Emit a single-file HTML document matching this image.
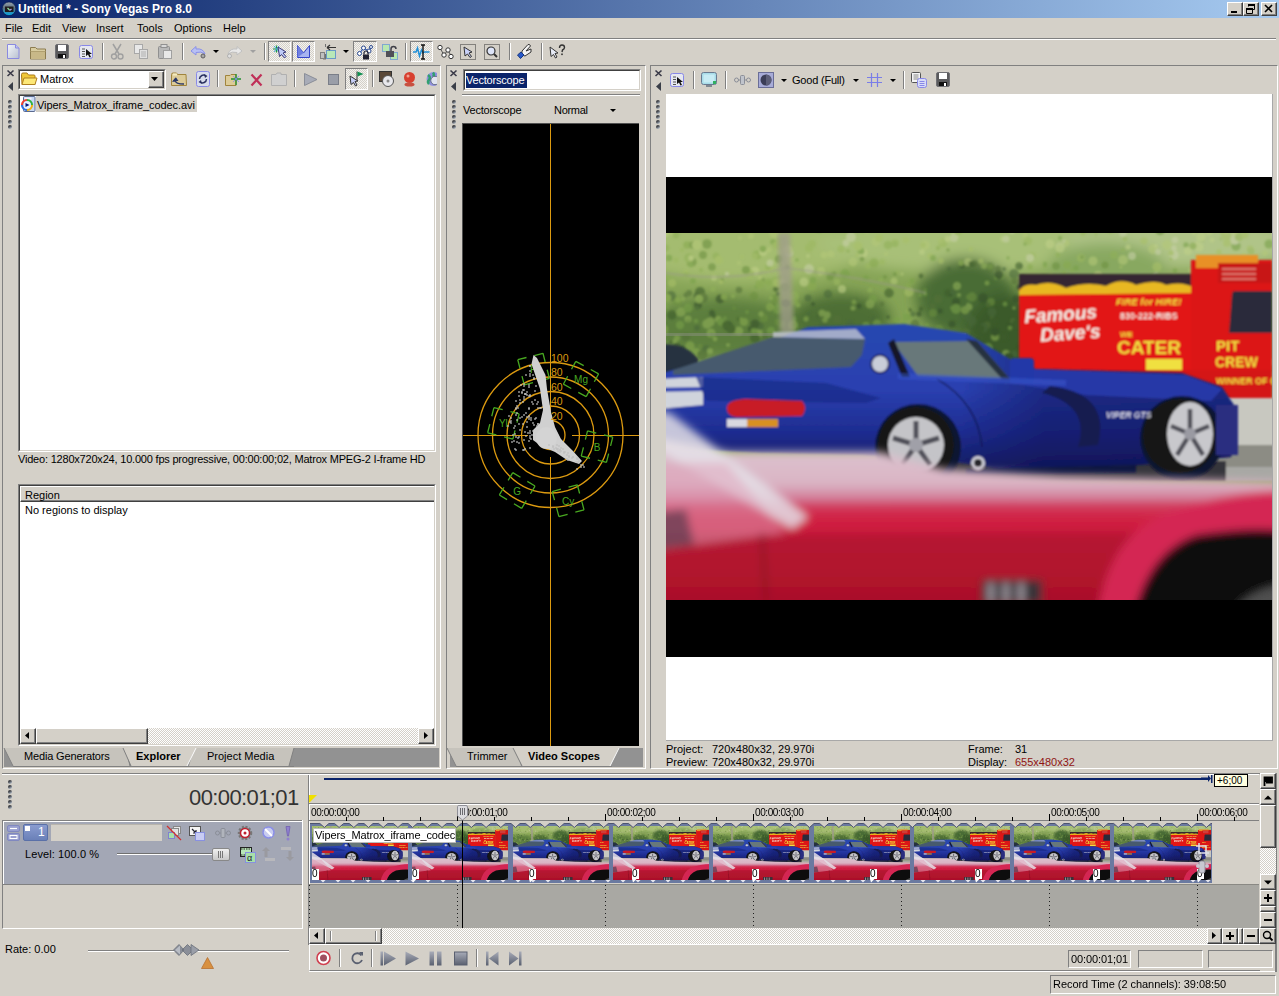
<!DOCTYPE html>
<html><head><meta charset="utf-8">
<style>
*{margin:0;padding:0;box-sizing:border-box}
html,body{width:1279px;height:996px;overflow:hidden;background:#D4D0C8;font-family:"Liberation Sans",sans-serif;font-size:11px;color:#000;position:relative}
.a{position:absolute}
.t{position:absolute;white-space:nowrap;line-height:13px}
.sunk{border-top:1px solid #808080;border-left:1px solid #808080;border-bottom:1px solid #fff;border-right:1px solid #fff}
.rais{border-top:1px solid #fff;border-left:1px solid #fff;border-bottom:1px solid #808080;border-right:1px solid #808080}
.btn{position:absolute;background:#D4D0C8;border-top:1px solid #fff;border-left:1px solid #fff;border-bottom:1px solid #404040;border-right:1px solid #404040;box-shadow:inset -1px -1px 0 #808080}
.chk{background:repeating-conic-gradient(#D4D0C8 0 25%,#fff 0 50%) 0 0/2px 2px}
.press{position:absolute;border-top:1px solid #808080;border-left:1px solid #808080;border-bottom:1px solid #fff;border-right:1px solid #fff;background:repeating-conic-gradient(#D4D0C8 0 25%,#f4f3f0 0 50%) 0 0/2px 2px}
.sep{position:absolute;width:2px;border-left:1px solid #808080;border-right:1px solid #fff}
.gd{position:absolute;width:4px;height:4px;border-radius:50%;background:linear-gradient(150deg,#303034 0%,#4a4c52 40%,#9aa4b0 75%,#d4d0c8 100%)}
svg{position:absolute;overflow:visible}
</style></head><body>
<svg width="0" height="0" style="position:absolute">
<defs>
<filter id="bl" x="-5%" y="-5%" width="110%" height="110%"><feGaussianBlur stdDeviation="0.8"/></filter>
<filter id="bl2" x="-10%" y="-10%" width="120%" height="120%"><feGaussianBlur stdDeviation="2"/></filter>
<filter id="bl3" x="-10%" y="-10%" width="120%" height="120%"><feGaussianBlur stdDeviation="4"/></filter>
<filter id="bl6" x="-20%" y="-20%" width="140%" height="140%"><feGaussianBlur stdDeviation="7"/></filter>
<linearGradient id="redcar" x1="0" y1="0" x2="0" y2="1">
<stop offset="0" stop-color="#dccad4"/><stop offset="0.27" stop-color="#dab4c4"/><stop offset="0.37" stop-color="#d06888"/><stop offset="0.45" stop-color="#cc2444"/><stop offset="0.8" stop-color="#b81430"/><stop offset="1" stop-color="#940c22"/>
</linearGradient>
<linearGradient id="bluecar" x1="0" y1="0" x2="0" y2="1">
<stop offset="0" stop-color="#2848b0"/><stop offset="0.45" stop-color="#2a40b0"/><stop offset="0.75" stop-color="#1e2c90"/><stop offset="1" stop-color="#141c60"/>
</linearGradient>
<linearGradient id="frontdark" x1="0" y1="0" x2="1" y2="0"><stop offset="0" stop-color="#0c1050" stop-opacity="0"/><stop offset="0.3" stop-color="#0c1050" stop-opacity="0.45"/><stop offset="1" stop-color="#0c1050" stop-opacity="0.5"/></linearGradient>
<g id="photo">
<rect x="-20" y="-20" width="646" height="407" fill="#86a456"/>
<g filter="url(#bl6)">
<ellipse cx="80" cy="15" rx="120" ry="35" fill="#a4bc70"/>
<ellipse cx="300" cy="10" rx="150" ry="30" fill="#a8c078"/>
<ellipse cx="520" cy="10" rx="120" ry="25" fill="#b0c488"/>
<ellipse cx="60" cy="95" rx="80" ry="30" fill="#5c7e3c"/>
<ellipse cx="175" cy="85" rx="50" ry="25" fill="#4e6e36"/>
<ellipse cx="300" cy="65" rx="50" ry="40" fill="#4a6c34"/>
<ellipse cx="340" cy="100" rx="40" ry="40" fill="#3a5a2a"/>
<ellipse cx="440" cy="35" rx="60" ry="25" fill="#88a860"/>
</g>
<g filter="url(#bl)" opacity="0.6"><circle cx="93" cy="100" r="3.7" fill="#90b058"/><circle cx="518" cy="148" r="3.2" fill="#90b058"/><circle cx="105" cy="74" r="4.3" fill="#3c5c2a"/><circle cx="222" cy="84" r="1.7" fill="#34502a"/><circle cx="567" cy="101" r="3.0" fill="#6c9040"/><circle cx="472" cy="55" r="3.0" fill="#78a048"/><circle cx="328" cy="101" r="3.8" fill="#48683a"/><circle cx="5" cy="109" r="1.8" fill="#3c5c2a"/><circle cx="274" cy="78" r="2.7" fill="#34502a"/><circle cx="85" cy="96" r="3.1" fill="#34502a"/><circle cx="37" cy="22" r="3.9" fill="#6c9040"/><circle cx="550" cy="111" r="4.2" fill="#78a048"/><circle cx="609" cy="1" r="3.5" fill="#c8d0a8"/><circle cx="508" cy="22" r="4.7" fill="#c8d0a8"/><circle cx="246" cy="48" r="3.1" fill="#88aa50"/><circle cx="189" cy="68" r="2.4" fill="#48683a"/><circle cx="89" cy="105" r="4.9" fill="#3c5c2a"/><circle cx="298" cy="78" r="4.1" fill="#34502a"/><circle cx="348" cy="41" r="4.9" fill="#48683a"/><circle cx="103" cy="17" r="2.7" fill="#b4c878"/><circle cx="207" cy="86" r="2.6" fill="#48683a"/><circle cx="96" cy="138" r="2.1" fill="#6c9040"/><circle cx="225" cy="99" r="3.9" fill="#34502a"/><circle cx="245" cy="148" r="4.9" fill="#3c5c2a"/><circle cx="543" cy="69" r="2.8" fill="#c8d0a8"/><circle cx="576" cy="29" r="3.5" fill="#a8c068"/><circle cx="494" cy="114" r="3.2" fill="#9cb860"/><circle cx="23" cy="31" r="2.5" fill="#88aa50"/><circle cx="146" cy="53" r="4.5" fill="#88aa50"/><circle cx="553" cy="147" r="4.1" fill="#6c9040"/><circle cx="21" cy="12" r="3.8" fill="#88aa50"/><circle cx="290" cy="142" r="4.6" fill="#48683a"/><circle cx="488" cy="131" r="3.6" fill="#88aa50"/><circle cx="293" cy="134" r="3.2" fill="#527038"/><circle cx="324" cy="34" r="4.2" fill="#3c5c2a"/><circle cx="229" cy="10" r="4.0" fill="#9cb860"/><circle cx="362" cy="93" r="4.5" fill="#78a048"/><circle cx="254" cy="99" r="4.1" fill="#527038"/><circle cx="74" cy="5" r="1.8" fill="#b4c878"/><circle cx="392" cy="116" r="1.8" fill="#c0d088"/><circle cx="400" cy="10" r="3.4" fill="#b4c878"/><circle cx="238" cy="132" r="3.7" fill="#527038"/><circle cx="105" cy="50" r="4.0" fill="#90b058"/><circle cx="464" cy="87" r="3.3" fill="#6c9040"/><circle cx="475" cy="117" r="1.5" fill="#6c9040"/><circle cx="531" cy="54" r="3.5" fill="#6c9040"/><circle cx="136" cy="144" r="3.6" fill="#3c5c2a"/><circle cx="143" cy="15" r="4.0" fill="#9cb860"/><circle cx="502" cy="118" r="3.2" fill="#78a048"/><circle cx="52" cy="86" r="3.3" fill="#90b058"/><circle cx="193" cy="73" r="2.5" fill="#34502a"/><circle cx="30" cy="120" r="4.9" fill="#88aa50"/><circle cx="31" cy="95" r="3.0" fill="#48683a"/><circle cx="398" cy="90" r="4.3" fill="#6c9040"/><circle cx="306" cy="142" r="3.9" fill="#90b058"/><circle cx="267" cy="73" r="2.9" fill="#527038"/><circle cx="34" cy="-6" r="3.8" fill="#b4c878"/><circle cx="145" cy="103" r="4.4" fill="#6c9040"/><circle cx="275" cy="28" r="2.8" fill="#a8c068"/><circle cx="133" cy="136" r="3.8" fill="#3c5c2a"/><circle cx="290" cy="69" r="4.0" fill="#34502a"/><circle cx="478" cy="90" r="4.2" fill="#88aa50"/><circle cx="448" cy="87" r="4.4" fill="#9cb860"/><circle cx="144" cy="137" r="2.9" fill="#6c9040"/><circle cx="506" cy="144" r="5.0" fill="#b4c878"/><circle cx="91" cy="22" r="4.6" fill="#88aa50"/><circle cx="81" cy="79" r="1.8" fill="#78a048"/><circle cx="378" cy="50" r="4.1" fill="#c0d088"/><circle cx="610" cy="17" r="3.0" fill="#78a048"/><circle cx="200" cy="93" r="3.9" fill="#78a048"/><circle cx="41" cy="-5" r="3.3" fill="#90b058"/><circle cx="595" cy="134" r="3.3" fill="#c8d0a8"/><circle cx="364" cy="34" r="2.8" fill="#88aa50"/><circle cx="282" cy="60" r="3.7" fill="#3c5c2a"/><circle cx="409" cy="97" r="3.7" fill="#c0d088"/><circle cx="108" cy="144" r="1.6" fill="#6c9040"/><circle cx="575" cy="103" r="1.6" fill="#90b058"/><circle cx="353" cy="54" r="3.0" fill="#34502a"/><circle cx="140" cy="-9" r="3.4" fill="#c0d088"/><circle cx="599" cy="20" r="2.8" fill="#b4c878"/><circle cx="222" cy="12" r="4.3" fill="#90b058"/><circle cx="261" cy="125" r="2.6" fill="#527038"/><circle cx="242" cy="78" r="2.3" fill="#90b058"/><circle cx="543" cy="-7" r="3.5" fill="#c0d088"/><circle cx="263" cy="123" r="5.0" fill="#6c9040"/><circle cx="108" cy="-0" r="4.4" fill="#9cb860"/><circle cx="325" cy="69" r="3.9" fill="#6c9040"/><circle cx="202" cy="33" r="2.7" fill="#9cb860"/><circle cx="391" cy="-9" r="4.3" fill="#78a048"/><circle cx="32" cy="72" r="3.9" fill="#34502a"/><circle cx="215" cy="46" r="2.1" fill="#78a048"/><circle cx="300" cy="99" r="3.8" fill="#527038"/><circle cx="10" cy="27" r="2.8" fill="#9cb860"/><circle cx="246" cy="101" r="4.0" fill="#6c9040"/><circle cx="39" cy="122" r="2.2" fill="#3c5c2a"/><circle cx="446" cy="87" r="3.7" fill="#88aa50"/><circle cx="99" cy="104" r="3.2" fill="#527038"/><circle cx="531" cy="61" r="1.6" fill="#9cb860"/><circle cx="415" cy="25" r="4.2" fill="#9cb860"/><circle cx="324" cy="135" r="4.9" fill="#527038"/><circle cx="122" cy="64" r="3.9" fill="#88aa50"/><circle cx="-3" cy="46" r="3.6" fill="#78a048"/><circle cx="6" cy="50" r="4.1" fill="#a8c068"/><circle cx="573" cy="76" r="4.6" fill="#c8d0a8"/><circle cx="132" cy="72" r="2.5" fill="#90b058"/><circle cx="453" cy="131" r="2.8" fill="#c0d088"/><circle cx="140" cy="86" r="2.7" fill="#88aa50"/><circle cx="349" cy="149" r="4.7" fill="#88aa50"/><circle cx="463" cy="147" r="4.1" fill="#6c9040"/><circle cx="57" cy="138" r="3.3" fill="#78a048"/><circle cx="175" cy="16" r="3.8" fill="#9cb860"/><circle cx="391" cy="113" r="4.1" fill="#88aa50"/><circle cx="123" cy="20" r="4.4" fill="#c8d0a8"/><circle cx="296" cy="32" r="3.4" fill="#34502a"/><circle cx="119" cy="116" r="2.7" fill="#90b058"/><circle cx="493" cy="108" r="4.1" fill="#a8c068"/><circle cx="226" cy="53" r="1.5" fill="#88aa50"/><circle cx="533" cy="37" r="4.4" fill="#6c9040"/><circle cx="113" cy="26" r="4.1" fill="#6c9040"/><circle cx="469" cy="98" r="1.6" fill="#a8c068"/><circle cx="303" cy="64" r="2.9" fill="#6c9040"/><circle cx="270" cy="105" r="1.7" fill="#3c5c2a"/><circle cx="460" cy="50" r="2.4" fill="#90b058"/><circle cx="277" cy="10" r="4.6" fill="#9cb860"/><circle cx="521" cy="132" r="1.8" fill="#9cb860"/><circle cx="146" cy="11" r="4.1" fill="#9cb860"/><circle cx="55" cy="89" r="3.8" fill="#78a048"/><circle cx="120" cy="70" r="4.0" fill="#34502a"/><circle cx="10" cy="134" r="4.7" fill="#78a048"/><circle cx="220" cy="21" r="2.0" fill="#b4c878"/><circle cx="154" cy="122" r="1.7" fill="#3c5c2a"/><circle cx="614" cy="27" r="4.0" fill="#a8c068"/><circle cx="303" cy="144" r="2.8" fill="#6c9040"/><circle cx="3" cy="142" r="2.0" fill="#6c9040"/><circle cx="463" cy="92" r="3.1" fill="#90b058"/><circle cx="357" cy="60" r="2.3" fill="#6c9040"/><circle cx="552" cy="125" r="4.2" fill="#78a048"/><circle cx="459" cy="45" r="2.0" fill="#b4c878"/><circle cx="490" cy="42" r="2.6" fill="#c8d0a8"/><circle cx="594" cy="63" r="2.2" fill="#b4c878"/><circle cx="381" cy="126" r="2.3" fill="#c0d088"/><circle cx="94" cy="93" r="3.7" fill="#48683a"/><circle cx="466" cy="23" r="3.9" fill="#c8d0a8"/><circle cx="1" cy="115" r="2.3" fill="#88aa50"/><circle cx="50" cy="23" r="3.5" fill="#90b058"/><circle cx="571" cy="102" r="4.3" fill="#88aa50"/><circle cx="179" cy="41" r="4.7" fill="#78a048"/><circle cx="544" cy="57" r="3.5" fill="#b4c878"/><circle cx="548" cy="113" r="3.5" fill="#a8c068"/><circle cx="14" cy="92" r="4.2" fill="#78a048"/><circle cx="476" cy="105" r="3.4" fill="#a8c068"/><circle cx="171" cy="49" r="3.2" fill="#9cb860"/><circle cx="234" cy="118" r="1.7" fill="#78a048"/><circle cx="356" cy="68" r="4.4" fill="#527038"/><circle cx="462" cy="14" r="2.6" fill="#c0d088"/><circle cx="159" cy="98" r="4.7" fill="#3c5c2a"/><circle cx="224" cy="128" r="3.0" fill="#48683a"/><circle cx="383" cy="66" r="3.4" fill="#78a048"/><circle cx="444" cy="-3" r="3.7" fill="#9cb860"/><circle cx="197" cy="20" r="4.7" fill="#c0d088"/><circle cx="305" cy="16" r="2.3" fill="#a8c068"/><circle cx="534" cy="44" r="3.8" fill="#c8d0a8"/><circle cx="522" cy="144" r="2.4" fill="#78a048"/><circle cx="321" cy="50" r="2.5" fill="#88aa50"/><circle cx="553" cy="19" r="2.8" fill="#a8c068"/><circle cx="196" cy="133" r="4.5" fill="#527038"/><circle cx="170" cy="110" r="3.9" fill="#48683a"/><circle cx="540" cy="29" r="5.0" fill="#b4c878"/><circle cx="340" cy="121" r="4.2" fill="#90b058"/><circle cx="238" cy="90" r="2.5" fill="#78a048"/><circle cx="123" cy="148" r="4.2" fill="#34502a"/><circle cx="484" cy="130" r="4.6" fill="#88aa50"/><circle cx="603" cy="70" r="4.0" fill="#90b058"/><circle cx="122" cy="17" r="4.7" fill="#c0d088"/><circle cx="406" cy="37" r="2.0" fill="#88aa50"/><circle cx="20" cy="104" r="4.1" fill="#527038"/><circle cx="274" cy="112" r="1.7" fill="#6c9040"/><circle cx="195" cy="18" r="3.5" fill="#78a048"/><circle cx="269" cy="104" r="2.9" fill="#527038"/><circle cx="585" cy="79" r="2.5" fill="#b4c878"/><circle cx="429" cy="124" r="4.9" fill="#9cb860"/><circle cx="280" cy="135" r="4.6" fill="#3c5c2a"/><circle cx="520" cy="12" r="2.7" fill="#78a048"/><circle cx="211" cy="91" r="4.4" fill="#78a048"/><circle cx="487" cy="16" r="4.9" fill="#b4c878"/><circle cx="94" cy="45" r="2.2" fill="#b4c878"/><circle cx="16" cy="-5" r="2.6" fill="#78a048"/><circle cx="337" cy="126" r="4.5" fill="#88aa50"/><circle cx="439" cy="87" r="2.2" fill="#a8c068"/><circle cx="571" cy="39" r="2.4" fill="#c8d0a8"/><circle cx="445" cy="51" r="4.3" fill="#9cb860"/><circle cx="457" cy="107" r="2.4" fill="#78a048"/><circle cx="133" cy="121" r="4.2" fill="#34502a"/><circle cx="613" cy="3" r="4.9" fill="#a8c068"/><circle cx="279" cy="101" r="4.2" fill="#527038"/><circle cx="440" cy="60" r="1.7" fill="#88aa50"/><circle cx="561" cy="4" r="4.0" fill="#a8c068"/><circle cx="556" cy="139" r="4.4" fill="#c0d088"/><circle cx="376" cy="-9" r="4.2" fill="#9cb860"/><circle cx="316" cy="105" r="1.5" fill="#48683a"/><circle cx="536" cy="148" r="4.9" fill="#c0d088"/><circle cx="349" cy="48" r="3.6" fill="#527038"/><circle cx="483" cy="68" r="2.4" fill="#78a048"/><circle cx="177" cy="112" r="2.3" fill="#48683a"/><circle cx="570" cy="13" r="4.7" fill="#78a048"/><circle cx="186" cy="32" r="2.7" fill="#90b058"/><circle cx="456" cy="49" r="3.3" fill="#c0d088"/><circle cx="392" cy="132" r="3.1" fill="#6c9040"/><circle cx="172" cy="124" r="3.8" fill="#90b058"/><circle cx="165" cy="21" r="3.5" fill="#b4c878"/><circle cx="376" cy="109" r="3.4" fill="#90b058"/><circle cx="134" cy="134" r="4.5" fill="#34502a"/><circle cx="410" cy="146" r="3.3" fill="#a8c068"/><circle cx="49" cy="106" r="2.4" fill="#90b058"/><circle cx="255" cy="76" r="2.4" fill="#3c5c2a"/><circle cx="44" cy="87" r="4.3" fill="#48683a"/><circle cx="521" cy="80" r="1.7" fill="#90b058"/><circle cx="97" cy="-8" r="4.2" fill="#c8d0a8"/><circle cx="597" cy="115" r="2.3" fill="#88aa50"/><circle cx="427" cy="149" r="4.5" fill="#88aa50"/><circle cx="153" cy="101" r="3.0" fill="#3c5c2a"/><circle cx="435" cy="145" r="3.0" fill="#88aa50"/><circle cx="401" cy="32" r="4.0" fill="#88aa50"/><circle cx="527" cy="69" r="3.6" fill="#c8d0a8"/><circle cx="27" cy="48" r="2.8" fill="#78a048"/><circle cx="322" cy="72" r="2.4" fill="#527038"/><circle cx="589" cy="27" r="2.2" fill="#b4c878"/><circle cx="400" cy="135" r="2.1" fill="#78a048"/><circle cx="98" cy="85" r="4.0" fill="#6c9040"/><circle cx="369" cy="-5" r="1.7" fill="#78a048"/><circle cx="291" cy="128" r="3.6" fill="#527038"/><circle cx="591" cy="50" r="2.6" fill="#90b058"/><circle cx="16" cy="17" r="2.2" fill="#9cb860"/><circle cx="228" cy="90" r="2.1" fill="#6c9040"/><circle cx="205" cy="98" r="2.2" fill="#527038"/><circle cx="52" cy="147" r="1.6" fill="#6c9040"/><circle cx="491" cy="44" r="2.9" fill="#6c9040"/><circle cx="289" cy="3" r="4.0" fill="#c0d088"/><circle cx="24" cy="113" r="4.7" fill="#88aa50"/><circle cx="147" cy="47" r="3.2" fill="#78a048"/><circle cx="518" cy="63" r="2.9" fill="#6c9040"/><circle cx="501" cy="112" r="4.6" fill="#90b058"/><circle cx="26" cy="29" r="4.7" fill="#6c9040"/><circle cx="487" cy="103" r="2.4" fill="#6c9040"/><circle cx="155" cy="82" r="3.5" fill="#34502a"/><circle cx="479" cy="138" r="4.2" fill="#88aa50"/><circle cx="549" cy="132" r="4.6" fill="#90b058"/><circle cx="109" cy="48" r="4.3" fill="#90b058"/><circle cx="506" cy="99" r="1.6" fill="#88aa50"/><circle cx="46" cy="34" r="3.8" fill="#6c9040"/><circle cx="583" cy="65" r="4.3" fill="#88aa50"/><circle cx="196" cy="26" r="2.4" fill="#6c9040"/><circle cx="522" cy="18" r="4.1" fill="#c0d088"/><circle cx="116" cy="91" r="3.4" fill="#78a048"/><circle cx="240" cy="7" r="3.3" fill="#a8c068"/><circle cx="44" cy="89" r="4.8" fill="#90b058"/><circle cx="593" cy="69" r="3.0" fill="#c8d0a8"/><circle cx="133" cy="121" r="1.6" fill="#34502a"/><circle cx="22" cy="86" r="3.6" fill="#90b058"/><circle cx="114" cy="8" r="2.9" fill="#90b058"/><circle cx="48" cy="83" r="2.4" fill="#3c5c2a"/><circle cx="420" cy="123" r="2.4" fill="#6c9040"/><circle cx="489" cy="58" r="1.7" fill="#6c9040"/><circle cx="455" cy="34" r="1.6" fill="#a8c068"/><circle cx="11" cy="68" r="4.8" fill="#6c9040"/><circle cx="187" cy="103" r="4.0" fill="#48683a"/><circle cx="353" cy="33" r="3.7" fill="#3c5c2a"/><circle cx="154" cy="41" r="2.1" fill="#b4c878"/><circle cx="73" cy="86" r="2.1" fill="#3c5c2a"/><circle cx="508" cy="72" r="2.1" fill="#78a048"/><circle cx="317" cy="116" r="4.9" fill="#3c5c2a"/><circle cx="261" cy="92" r="1.8" fill="#78a048"/><circle cx="207" cy="66" r="4.2" fill="#78a048"/><circle cx="34" cy="145" r="4.1" fill="#88aa50"/><circle cx="143" cy="96" r="2.3" fill="#527038"/><circle cx="489" cy="103" r="3.7" fill="#88aa50"/><circle cx="584" cy="16" r="3.4" fill="#a8c068"/><circle cx="603" cy="140" r="1.8" fill="#a8c068"/><circle cx="153" cy="-4" r="3.8" fill="#78a048"/><circle cx="350" cy="66" r="3.7" fill="#34502a"/><circle cx="117" cy="49" r="3.2" fill="#b4c878"/><circle cx="531" cy="11" r="2.7" fill="#c0d088"/><circle cx="410" cy="35" r="2.8" fill="#78a048"/><circle cx="120" cy="121" r="2.1" fill="#88aa50"/><circle cx="536" cy="-5" r="4.2" fill="#c8d0a8"/><circle cx="321" cy="92" r="3.5" fill="#527038"/><circle cx="128" cy="86" r="2.7" fill="#78a048"/><circle cx="-4" cy="87" r="3.5" fill="#90b058"/><circle cx="88" cy="98" r="3.1" fill="#78a048"/><circle cx="87" cy="144" r="3.0" fill="#6c9040"/><circle cx="394" cy="14" r="4.6" fill="#c8d0a8"/><circle cx="330" cy="45" r="1.9" fill="#78a048"/><circle cx="603" cy="58" r="2.4" fill="#c0d088"/><circle cx="168" cy="-7" r="2.4" fill="#a8c068"/><circle cx="505" cy="20" r="2.7" fill="#a8c068"/><circle cx="446" cy="45" r="2.1" fill="#6c9040"/><circle cx="528" cy="47" r="4.4" fill="#c8d0a8"/><circle cx="499" cy="72" r="4.9" fill="#c8d0a8"/><circle cx="442" cy="68" r="3.6" fill="#88aa50"/><circle cx="97" cy="47" r="2.0" fill="#6c9040"/><circle cx="470" cy="127" r="3.4" fill="#6c9040"/><circle cx="231" cy="40" r="2.2" fill="#9cb860"/><circle cx="348" cy="121" r="3.3" fill="#48683a"/><circle cx="224" cy="98" r="4.3" fill="#3c5c2a"/><circle cx="99" cy="111" r="2.9" fill="#90b058"/><circle cx="62" cy="112" r="2.1" fill="#90b058"/><circle cx="443" cy="-5" r="2.3" fill="#78a048"/><circle cx="569" cy="1" r="3.7" fill="#c0d088"/><circle cx="89" cy="23" r="3.1" fill="#9cb860"/><circle cx="39" cy="133" r="3.2" fill="#88aa50"/><circle cx="12" cy="67" r="3.0" fill="#88aa50"/><circle cx="114" cy="115" r="4.5" fill="#3c5c2a"/><circle cx="344" cy="93" r="2.7" fill="#34502a"/><circle cx="184" cy="90" r="3.7" fill="#48683a"/><circle cx="176" cy="56" r="4.0" fill="#c0d088"/><circle cx="439" cy="32" r="3.5" fill="#6c9040"/><circle cx="254" cy="141" r="1.6" fill="#34502a"/><circle cx="603" cy="11" r="4.6" fill="#78a048"/><circle cx="422" cy="125" r="2.5" fill="#6c9040"/><circle cx="493" cy="46" r="4.0" fill="#90b058"/><circle cx="560" cy="86" r="1.6" fill="#c8d0a8"/><circle cx="291" cy="112" r="4.6" fill="#48683a"/><circle cx="-4" cy="148" r="2.7" fill="#6c9040"/><circle cx="0" cy="133" r="3.9" fill="#527038"/><circle cx="498" cy="46" r="3.1" fill="#c0d088"/><circle cx="80" cy="-0" r="2.0" fill="#a8c068"/><circle cx="71" cy="136" r="3.6" fill="#90b058"/><circle cx="309" cy="31" r="3.5" fill="#527038"/><circle cx="80" cy="146" r="2.8" fill="#6c9040"/><circle cx="40" cy="116" r="3.8" fill="#48683a"/><circle cx="124" cy="27" r="3.3" fill="#b4c878"/><circle cx="103" cy="35" r="4.5" fill="#a8c068"/><circle cx="262" cy="113" r="3.0" fill="#527038"/><circle cx="5" cy="129" r="4.3" fill="#78a048"/><circle cx="112" cy="89" r="3.4" fill="#6c9040"/><circle cx="89" cy="91" r="4.5" fill="#34502a"/><circle cx="44" cy="118" r="3.1" fill="#90b058"/><circle cx="275" cy="137" r="4.8" fill="#3c5c2a"/><circle cx="379" cy="33" r="2.2" fill="#88aa50"/><circle cx="430" cy="1" r="1.5" fill="#9cb860"/><circle cx="201" cy="-3" r="3.1" fill="#c0d088"/><circle cx="335" cy="43" r="3.3" fill="#78a048"/><circle cx="570" cy="10" r="2.3" fill="#6c9040"/><circle cx="585" cy="118" r="1.5" fill="#6c9040"/><circle cx="378" cy="141" r="4.8" fill="#a8c068"/><circle cx="263" cy="149" r="4.7" fill="#78a048"/><circle cx="317" cy="65" r="4.9" fill="#34502a"/><circle cx="491" cy="34" r="4.7" fill="#a8c068"/><circle cx="501" cy="12" r="4.9" fill="#b4c878"/><circle cx="492" cy="19" r="2.9" fill="#c8d0a8"/><circle cx="296" cy="-5" r="3.5" fill="#90b058"/><circle cx="143" cy="81" r="1.8" fill="#48683a"/><circle cx="215" cy="47" r="2.3" fill="#90b058"/><circle cx="355" cy="114" r="3.8" fill="#34502a"/><circle cx="102" cy="49" r="3.5" fill="#88aa50"/><circle cx="386" cy="75" r="4.7" fill="#b4c878"/><circle cx="402" cy="147" r="2.5" fill="#9cb860"/><circle cx="171" cy="86" r="4.1" fill="#527038"/><circle cx="429" cy="119" r="3.4" fill="#78a048"/><circle cx="408" cy="105" r="1.5" fill="#b4c878"/><circle cx="367" cy="100" r="4.6" fill="#88aa50"/><circle cx="282" cy="6" r="3.3" fill="#c0d088"/><circle cx="601" cy="42" r="4.7" fill="#6c9040"/><circle cx="283" cy="36" r="2.3" fill="#48683a"/><circle cx="139" cy="-8" r="4.3" fill="#c0d088"/><circle cx="11" cy="105" r="3.1" fill="#88aa50"/><circle cx="583" cy="137" r="2.9" fill="#88aa50"/><circle cx="243" cy="59" r="4.7" fill="#a8c068"/><circle cx="83" cy="142" r="1.9" fill="#34502a"/><circle cx="324" cy="85" r="1.8" fill="#34502a"/><circle cx="302" cy="29" r="4.0" fill="#b4c878"/><circle cx="436" cy="57" r="4.1" fill="#88aa50"/><circle cx="2" cy="127" r="2.6" fill="#6c9040"/><circle cx="255" cy="117" r="2.0" fill="#78a048"/><circle cx="34" cy="59" r="5.0" fill="#3c5c2a"/><circle cx="330" cy="148" r="1.9" fill="#34502a"/><circle cx="595" cy="62" r="1.8" fill="#6c9040"/><circle cx="20" cy="62" r="2.5" fill="#527038"/><circle cx="478" cy="8" r="3.6" fill="#a8c068"/><circle cx="563" cy="108" r="4.5" fill="#9cb860"/><circle cx="403" cy="74" r="2.3" fill="#c0d088"/><circle cx="-6" cy="118" r="2.5" fill="#90b058"/><circle cx="370" cy="63" r="2.3" fill="#88aa50"/><circle cx="527" cy="144" r="3.6" fill="#90b058"/><circle cx="550" cy="97" r="2.7" fill="#78a048"/><circle cx="286" cy="91" r="3.5" fill="#34502a"/><circle cx="533" cy="133" r="4.1" fill="#c8d0a8"/><circle cx="362" cy="76" r="4.4" fill="#9cb860"/><circle cx="89" cy="38" r="4.3" fill="#c0d088"/><circle cx="46" cy="80" r="2.9" fill="#34502a"/><circle cx="388" cy="69" r="2.8" fill="#90b058"/><circle cx="570" cy="-7" r="1.8" fill="#90b058"/><circle cx="227" cy="108" r="2.9" fill="#48683a"/><circle cx="601" cy="65" r="3.6" fill="#78a048"/><circle cx="505" cy="56" r="3.1" fill="#90b058"/><circle cx="68" cy="75" r="1.8" fill="#6c9040"/><circle cx="508" cy="45" r="2.7" fill="#c0d088"/><circle cx="142" cy="119" r="4.4" fill="#3c5c2a"/><circle cx="5" cy="63" r="5.0" fill="#48683a"/><circle cx="63" cy="132" r="3.9" fill="#88aa50"/><circle cx="37" cy="65" r="4.9" fill="#527038"/><circle cx="338" cy="36" r="2.1" fill="#48683a"/><circle cx="27" cy="12" r="3.8" fill="#6c9040"/><circle cx="399" cy="137" r="2.0" fill="#c0d088"/><circle cx="169" cy="109" r="3.2" fill="#34502a"/><circle cx="54" cy="66" r="4.4" fill="#34502a"/><circle cx="513" cy="89" r="3.8" fill="#90b058"/><circle cx="112" cy="76" r="5.0" fill="#78a048"/><circle cx="5" cy="-1" r="3.3" fill="#b4c878"/><circle cx="23" cy="60" r="3.1" fill="#527038"/><circle cx="256" cy="112" r="2.0" fill="#34502a"/><circle cx="104" cy="74" r="4.2" fill="#88aa50"/><circle cx="306" cy="64" r="4.7" fill="#6c9040"/><circle cx="68" cy="98" r="4.8" fill="#6c9040"/><circle cx="356" cy="99" r="1.9" fill="#3c5c2a"/><circle cx="505" cy="26" r="1.8" fill="#9cb860"/><circle cx="208" cy="108" r="3.7" fill="#78a048"/><circle cx="472" cy="51" r="1.8" fill="#90b058"/><circle cx="41" cy="11" r="4.8" fill="#6c9040"/><circle cx="97" cy="19" r="4.0" fill="#c0d088"/><circle cx="353" cy="136" r="3.7" fill="#48683a"/><circle cx="22" cy="87" r="1.6" fill="#6c9040"/><circle cx="483" cy="50" r="3.6" fill="#88aa50"/><circle cx="383" cy="141" r="3.0" fill="#90b058"/><circle cx="456" cy="30" r="2.2" fill="#78a048"/><circle cx="9" cy="108" r="2.3" fill="#90b058"/><circle cx="510" cy="8" r="2.1" fill="#b4c878"/><circle cx="249" cy="116" r="3.1" fill="#527038"/><circle cx="216" cy="29" r="2.9" fill="#9cb860"/><circle cx="229" cy="11" r="2.9" fill="#90b058"/><circle cx="75" cy="86" r="1.8" fill="#88aa50"/><circle cx="288" cy="115" r="4.7" fill="#88aa50"/><circle cx="254" cy="62" r="2.0" fill="#78a048"/><circle cx="441" cy="86" r="1.7" fill="#c8d0a8"/><circle cx="31" cy="63" r="3.2" fill="#34502a"/><circle cx="409" cy="137" r="2.2" fill="#6c9040"/><circle cx="455" cy="109" r="3.6" fill="#88aa50"/><circle cx="382" cy="-6" r="2.2" fill="#6c9040"/><circle cx="272" cy="15" r="2.2" fill="#90b058"/><circle cx="234" cy="130" r="2.9" fill="#34502a"/><circle cx="337" cy="6" r="2.7" fill="#c0d088"/><circle cx="155" cy="84" r="2.2" fill="#527038"/><circle cx="362" cy="8" r="4.3" fill="#9cb860"/><circle cx="590" cy="122" r="4.7" fill="#a8c068"/><circle cx="267" cy="80" r="3.9" fill="#6c9040"/><circle cx="551" cy="-5" r="3.5" fill="#c8d0a8"/><circle cx="528" cy="104" r="2.1" fill="#6c9040"/><circle cx="592" cy="149" r="2.4" fill="#90b058"/><circle cx="448" cy="22" r="3.9" fill="#90b058"/><circle cx="459" cy="103" r="4.8" fill="#88aa50"/><circle cx="-2" cy="96" r="4.4" fill="#88aa50"/><circle cx="463" cy="141" r="4.3" fill="#6c9040"/><circle cx="301" cy="82" r="4.7" fill="#48683a"/><circle cx="569" cy="119" r="4.7" fill="#90b058"/><circle cx="473" cy="115" r="3.4" fill="#88aa50"/><circle cx="90" cy="54" r="1.7" fill="#78a048"/><circle cx="411" cy="78" r="2.0" fill="#c0d088"/><circle cx="445" cy="108" r="3.3" fill="#90b058"/><circle cx="431" cy="105" r="4.3" fill="#90b058"/><circle cx="357" cy="44" r="1.9" fill="#3c5c2a"/><circle cx="164" cy="44" r="3.6" fill="#6c9040"/><circle cx="555" cy="44" r="4.3" fill="#88aa50"/><circle cx="613" cy="102" r="2.0" fill="#6c9040"/><circle cx="185" cy="4" r="4.9" fill="#c8d0a8"/><circle cx="530" cy="67" r="4.0" fill="#a8c068"/><circle cx="84" cy="41" r="4.4" fill="#9cb860"/><circle cx="381" cy="122" r="3.1" fill="#9cb860"/><circle cx="417" cy="-0" r="2.7" fill="#9cb860"/><circle cx="244" cy="84" r="2.4" fill="#78a048"/><circle cx="332" cy="36" r="3.2" fill="#527038"/><circle cx="338" cy="148" r="2.2" fill="#527038"/><circle cx="1" cy="65" r="4.2" fill="#88aa50"/><circle cx="127" cy="92" r="5.0" fill="#90b058"/><circle cx="589" cy="139" r="3.3" fill="#c8d0a8"/><circle cx="573" cy="71" r="1.8" fill="#90b058"/><circle cx="224" cy="108" r="3.7" fill="#6c9040"/><circle cx="536" cy="29" r="4.0" fill="#c0d088"/><circle cx="299" cy="77" r="4.1" fill="#88aa50"/><circle cx="256" cy="19" r="2.8" fill="#c0d088"/><circle cx="216" cy="71" r="2.4" fill="#527038"/><circle cx="467" cy="126" r="2.4" fill="#9cb860"/><circle cx="236" cy="41" r="1.7" fill="#b4c878"/><circle cx="192" cy="13" r="4.6" fill="#a8c068"/><circle cx="364" cy="26" r="3.7" fill="#9cb860"/><circle cx="219" cy="44" r="2.0" fill="#6c9040"/><circle cx="60" cy="148" r="1.8" fill="#6c9040"/><circle cx="423" cy="109" r="1.9" fill="#88aa50"/><circle cx="470" cy="113" r="4.5" fill="#88aa50"/><circle cx="555" cy="6" r="1.5" fill="#9cb860"/><circle cx="359" cy="2" r="2.5" fill="#b4c878"/><circle cx="211" cy="112" r="2.6" fill="#3c5c2a"/><circle cx="546" cy="7" r="2.5" fill="#c0d088"/><circle cx="35" cy="37" r="2.2" fill="#90b058"/><circle cx="503" cy="128" r="5.0" fill="#b4c878"/><circle cx="326" cy="85" r="2.3" fill="#527038"/><circle cx="521" cy="118" r="2.5" fill="#b4c878"/><circle cx="109" cy="66" r="4.6" fill="#6c9040"/><circle cx="70" cy="136" r="4.6" fill="#48683a"/><circle cx="460" cy="48" r="4.4" fill="#6c9040"/><circle cx="457" cy="17" r="1.9" fill="#90b058"/><circle cx="420" cy="60" r="1.7" fill="#6c9040"/><circle cx="447" cy="133" r="2.7" fill="#90b058"/><circle cx="588" cy="97" r="3.0" fill="#78a048"/><circle cx="47" cy="56" r="2.6" fill="#90b058"/><circle cx="525" cy="117" r="3.1" fill="#90b058"/><circle cx="259" cy="12" r="4.9" fill="#b4c878"/><circle cx="569" cy="7" r="4.7" fill="#c8d0a8"/><circle cx="604" cy="142" r="3.2" fill="#b4c878"/><circle cx="62" cy="93" r="4.9" fill="#34502a"/><circle cx="508" cy="15" r="2.7" fill="#c8d0a8"/><circle cx="555" cy="34" r="3.6" fill="#b4c878"/><circle cx="156" cy="80" r="3.6" fill="#90b058"/><circle cx="240" cy="84" r="3.4" fill="#78a048"/><circle cx="288" cy="5" r="3.9" fill="#c8d0a8"/><circle cx="614" cy="56" r="1.6" fill="#90b058"/><circle cx="463" cy="82" r="2.8" fill="#c0d088"/><circle cx="394" cy="15" r="4.5" fill="#c0d088"/><circle cx="41" cy="91" r="4.8" fill="#90b058"/><circle cx="586" cy="61" r="3.6" fill="#9cb860"/><circle cx="105" cy="65" r="1.9" fill="#90b058"/><circle cx="519" cy="119" r="4.6" fill="#c8d0a8"/><circle cx="149" cy="121" r="1.8" fill="#48683a"/><circle cx="563" cy="68" r="3.4" fill="#b4c878"/><circle cx="425" cy="57" r="4.7" fill="#88aa50"/><circle cx="138" cy="49" r="4.5" fill="#c0d088"/><circle cx="478" cy="86" r="3.6" fill="#88aa50"/><circle cx="369" cy="123" r="2.9" fill="#6c9040"/><circle cx="261" cy="147" r="2.1" fill="#78a048"/><circle cx="340" cy="6" r="3.5" fill="#c8d0a8"/><circle cx="595" cy="109" r="4.4" fill="#90b058"/><circle cx="559" cy="1" r="4.6" fill="#a8c068"/><circle cx="85" cy="3" r="3.1" fill="#b4c878"/><circle cx="130" cy="118" r="3.4" fill="#78a048"/><circle cx="366" cy="23" r="3.8" fill="#9cb860"/><circle cx="295" cy="125" r="2.4" fill="#90b058"/><circle cx="612" cy="-3" r="3.9" fill="#b4c878"/><circle cx="447" cy="72" r="3.4" fill="#90b058"/><circle cx="384" cy="11" r="4.5" fill="#c0d088"/><circle cx="328" cy="141" r="2.8" fill="#48683a"/><circle cx="534" cy="27" r="2.7" fill="#c8d0a8"/><circle cx="53" cy="27" r="4.3" fill="#a8c068"/><circle cx="273" cy="115" r="4.2" fill="#48683a"/><circle cx="473" cy="131" r="2.9" fill="#6c9040"/><circle cx="249" cy="91" r="4.4" fill="#527038"/><circle cx="507" cy="114" r="3.2" fill="#9cb860"/><circle cx="127" cy="69" r="2.1" fill="#78a048"/><circle cx="392" cy="22" r="2.4" fill="#90b058"/><circle cx="243" cy="128" r="4.3" fill="#3c5c2a"/><circle cx="438" cy="-8" r="2.3" fill="#78a048"/><circle cx="373" cy="103" r="4.5" fill="#88aa50"/><circle cx="494" cy="-3" r="4.9" fill="#6c9040"/><circle cx="315" cy="28" r="2.7" fill="#a8c068"/><circle cx="240" cy="110" r="3.4" fill="#90b058"/><circle cx="-1" cy="1" r="3.1" fill="#c0d088"/><circle cx="151" cy="149" r="2.7" fill="#88aa50"/><circle cx="244" cy="77" r="2.0" fill="#3c5c2a"/><circle cx="162" cy="61" r="4.3" fill="#48683a"/><circle cx="157" cy="115" r="3.9" fill="#90b058"/><circle cx="557" cy="43" r="2.6" fill="#78a048"/><circle cx="56" cy="47" r="2.0" fill="#6c9040"/><circle cx="473" cy="140" r="3.4" fill="#6c9040"/><circle cx="561" cy="143" r="2.0" fill="#6c9040"/><circle cx="3" cy="25" r="3.3" fill="#78a048"/><circle cx="457" cy="27" r="4.9" fill="#b4c878"/><circle cx="561" cy="113" r="3.3" fill="#78a048"/><circle cx="462" cy="71" r="4.2" fill="#88aa50"/><circle cx="302" cy="71" r="1.7" fill="#78a048"/><circle cx="595" cy="94" r="3.6" fill="#c0d088"/><circle cx="428" cy="49" r="1.8" fill="#6c9040"/><circle cx="328" cy="88" r="3.6" fill="#3c5c2a"/><circle cx="408" cy="69" r="2.1" fill="#90b058"/><circle cx="560" cy="-3" r="4.3" fill="#b4c878"/><circle cx="31" cy="75" r="2.2" fill="#48683a"/><circle cx="546" cy="79" r="3.4" fill="#88aa50"/><circle cx="491" cy="74" r="3.8" fill="#6c9040"/><circle cx="20" cy="39" r="2.5" fill="#a8c068"/><circle cx="435" cy="78" r="1.9" fill="#88aa50"/><circle cx="190" cy="116" r="4.0" fill="#48683a"/><circle cx="544" cy="-5" r="1.9" fill="#c8d0a8"/><circle cx="382" cy="83" r="4.3" fill="#90b058"/><circle cx="533" cy="14" r="4.5" fill="#c0d088"/><circle cx="551" cy="96" r="4.9" fill="#c0d088"/><circle cx="73" cy="30" r="2.0" fill="#b4c878"/><circle cx="40" cy="134" r="4.3" fill="#90b058"/><circle cx="306" cy="31" r="3.3" fill="#3c5c2a"/><circle cx="208" cy="30" r="4.7" fill="#88aa50"/><circle cx="305" cy="92" r="1.8" fill="#527038"/><circle cx="180" cy="-10" r="4.1" fill="#78a048"/><circle cx="23" cy="25" r="4.8" fill="#90b058"/><circle cx="347" cy="88" r="3.0" fill="#527038"/><circle cx="490" cy="13" r="1.9" fill="#c0d088"/><circle cx="317" cy="95" r="4.8" fill="#48683a"/><circle cx="223" cy="60" r="4.7" fill="#3c5c2a"/><circle cx="390" cy="54" r="3.6" fill="#a8c068"/><circle cx="516" cy="63" r="4.1" fill="#9cb860"/><circle cx="204" cy="57" r="2.6" fill="#90b058"/><circle cx="210" cy="9" r="4.4" fill="#b4c878"/><circle cx="370" cy="111" r="2.8" fill="#88aa50"/><circle cx="528" cy="124" r="1.8" fill="#6c9040"/><circle cx="102" cy="55" r="2.0" fill="#90b058"/><circle cx="122" cy="118" r="3.2" fill="#6c9040"/><circle cx="229" cy="147" r="3.3" fill="#78a048"/><circle cx="231" cy="124" r="3.3" fill="#88aa50"/><circle cx="364" cy="119" r="2.0" fill="#90b058"/><circle cx="33" cy="66" r="4.2" fill="#90b058"/><circle cx="336" cy="142" r="3.6" fill="#48683a"/><circle cx="246" cy="48" r="2.2" fill="#78a048"/><circle cx="589" cy="74" r="3.8" fill="#78a048"/><circle cx="338" cy="104" r="3.9" fill="#3c5c2a"/><circle cx="416" cy="24" r="1.6" fill="#6c9040"/><circle cx="443" cy="112" r="2.8" fill="#78a048"/><circle cx="10" cy="2" r="3.4" fill="#90b058"/><circle cx="495" cy="66" r="4.7" fill="#88aa50"/><circle cx="585" cy="18" r="3.5" fill="#9cb860"/><circle cx="131" cy="27" r="1.8" fill="#78a048"/><circle cx="341" cy="146" r="4.9" fill="#527038"/><circle cx="303" cy="74" r="3.6" fill="#90b058"/><circle cx="319" cy="116" r="4.4" fill="#78a048"/><circle cx="-3" cy="99" r="4.9" fill="#88aa50"/><circle cx="282" cy="17" r="1.7" fill="#6c9040"/><circle cx="95" cy="81" r="2.7" fill="#90b058"/><circle cx="589" cy="34" r="2.2" fill="#6c9040"/><circle cx="158" cy="127" r="1.6" fill="#527038"/><circle cx="406" cy="-6" r="4.2" fill="#a8c068"/><circle cx="73" cy="98" r="4.4" fill="#90b058"/><circle cx="580" cy="110" r="1.8" fill="#90b058"/><circle cx="291" cy="-7" r="3.7" fill="#c8d0a8"/><circle cx="-1" cy="73" r="3.8" fill="#78a048"/><circle cx="609" cy="50" r="3.1" fill="#78a048"/><circle cx="573" cy="4" r="4.4" fill="#9cb860"/><circle cx="596" cy="87" r="2.9" fill="#88aa50"/><circle cx="464" cy="66" r="3.1" fill="#a8c068"/><circle cx="311" cy="129" r="4.6" fill="#88aa50"/><circle cx="412" cy="122" r="2.0" fill="#88aa50"/><circle cx="314" cy="96" r="4.3" fill="#3c5c2a"/><circle cx="35" cy="137" r="2.4" fill="#90b058"/><circle cx="181" cy="144" r="3.9" fill="#88aa50"/><circle cx="355" cy="33" r="1.6" fill="#34502a"/><circle cx="326" cy="103" r="2.6" fill="#3c5c2a"/><circle cx="119" cy="147" r="2.8" fill="#90b058"/><circle cx="361" cy="97" r="2.1" fill="#88aa50"/><circle cx="344" cy="95" r="2.3" fill="#78a048"/><circle cx="364" cy="25" r="4.0" fill="#c8d0a8"/><circle cx="431" cy="122" r="1.8" fill="#78a048"/><circle cx="243" cy="115" r="2.1" fill="#78a048"/><circle cx="484" cy="104" r="4.5" fill="#9cb860"/><circle cx="65" cy="96" r="4.7" fill="#3c5c2a"/><circle cx="11" cy="113" r="3.2" fill="#34502a"/><circle cx="67" cy="63" r="2.2" fill="#90b058"/><circle cx="504" cy="115" r="1.6" fill="#88aa50"/><circle cx="278" cy="108" r="4.1" fill="#34502a"/><circle cx="102" cy="34" r="3.1" fill="#90b058"/><circle cx="279" cy="149" r="2.3" fill="#527038"/><circle cx="188" cy="69" r="2.5" fill="#88aa50"/><circle cx="147" cy="71" r="2.0" fill="#34502a"/><circle cx="207" cy="144" r="2.4" fill="#88aa50"/><circle cx="97" cy="16" r="3.3" fill="#78a048"/><circle cx="476" cy="52" r="2.2" fill="#b4c878"/><circle cx="242" cy="53" r="2.9" fill="#88aa50"/><circle cx="605" cy="129" r="3.6" fill="#c0d088"/><circle cx="378" cy="43" r="2.2" fill="#78a048"/><circle cx="2" cy="45" r="2.8" fill="#90b058"/><circle cx="612" cy="137" r="2.6" fill="#6c9040"/><circle cx="228" cy="48" r="3.5" fill="#b4c878"/><circle cx="378" cy="-5" r="3.4" fill="#6c9040"/><circle cx="457" cy="-0" r="3.8" fill="#c8d0a8"/><circle cx="204" cy="71" r="4.5" fill="#90b058"/><circle cx="110" cy="56" r="2.8" fill="#3c5c2a"/><circle cx="119" cy="54" r="4.2" fill="#6c9040"/><circle cx="579" cy="2" r="3.5" fill="#a8c068"/><circle cx="322" cy="115" r="5.0" fill="#78a048"/><circle cx="-3" cy="64" r="2.0" fill="#78a048"/><circle cx="264" cy="23" r="2.9" fill="#a8c068"/><circle cx="528" cy="-0" r="2.2" fill="#c0d088"/><circle cx="578" cy="21" r="2.2" fill="#b4c878"/><circle cx="142" cy="65" r="3.5" fill="#48683a"/><circle cx="266" cy="-9" r="1.6" fill="#88aa50"/><circle cx="434" cy="119" r="4.6" fill="#78a048"/><circle cx="390" cy="34" r="2.1" fill="#78a048"/><circle cx="271" cy="145" r="2.9" fill="#527038"/><circle cx="255" cy="43" r="2.4" fill="#3c5c2a"/><circle cx="58" cy="64" r="3.0" fill="#88aa50"/><circle cx="525" cy="37" r="2.6" fill="#b4c878"/><circle cx="495" cy="122" r="1.5" fill="#78a048"/><circle cx="395" cy="98" r="3.7" fill="#c8d0a8"/><circle cx="538" cy="56" r="4.8" fill="#c8d0a8"/><circle cx="326" cy="79" r="4.5" fill="#48683a"/><circle cx="201" cy="108" r="4.6" fill="#48683a"/><circle cx="361" cy="128" r="1.8" fill="#90b058"/><circle cx="392" cy="119" r="4.7" fill="#90b058"/><circle cx="158" cy="91" r="3.9" fill="#48683a"/><circle cx="592" cy="58" r="2.1" fill="#c0d088"/><circle cx="60" cy="125" r="3.9" fill="#3c5c2a"/><circle cx="571" cy="86" r="4.8" fill="#a8c068"/><circle cx="394" cy="5" r="2.0" fill="#78a048"/><circle cx="462" cy="46" r="1.8" fill="#78a048"/><circle cx="113" cy="11" r="4.8" fill="#9cb860"/><circle cx="80" cy="37" r="4.0" fill="#6c9040"/><circle cx="191" cy="22" r="1.9" fill="#a8c068"/><circle cx="259" cy="61" r="2.3" fill="#78a048"/><circle cx="533" cy="92" r="3.7" fill="#78a048"/><circle cx="253" cy="81" r="2.7" fill="#34502a"/><circle cx="561" cy="10" r="4.0" fill="#a8c068"/><circle cx="143" cy="36" r="4.9" fill="#c8d0a8"/><circle cx="114" cy="-4" r="1.8" fill="#b4c878"/><circle cx="379" cy="31" r="2.3" fill="#78a048"/><circle cx="293" cy="62" r="2.1" fill="#90b058"/><circle cx="142" cy="23" r="1.8" fill="#c0d088"/><circle cx="88" cy="63" r="4.2" fill="#6c9040"/><circle cx="9" cy="127" r="3.7" fill="#34502a"/><circle cx="291" cy="53" r="4.2" fill="#90b058"/><circle cx="105" cy="98" r="4.2" fill="#78a048"/><circle cx="128" cy="63" r="5.0" fill="#90b058"/><circle cx="351" cy="91" r="4.7" fill="#3c5c2a"/><circle cx="409" cy="-4" r="2.8" fill="#a8c068"/><circle cx="45" cy="100" r="4.5" fill="#90b058"/><circle cx="13" cy="80" r="3.3" fill="#88aa50"/><circle cx="73" cy="57" r="3.3" fill="#527038"/><circle cx="445" cy="50" r="5.0" fill="#b4c878"/><circle cx="474" cy="65" r="1.8" fill="#90b058"/><circle cx="583" cy="124" r="3.9" fill="#78a048"/><circle cx="497" cy="93" r="2.5" fill="#78a048"/><circle cx="76" cy="24" r="1.8" fill="#a8c068"/><circle cx="15" cy="79" r="4.7" fill="#90b058"/><circle cx="472" cy="122" r="2.6" fill="#78a048"/><circle cx="115" cy="32" r="1.5" fill="#78a048"/><circle cx="25" cy="25" r="2.7" fill="#c0d088"/><circle cx="363" cy="124" r="4.9" fill="#78a048"/><circle cx="283" cy="119" r="3.1" fill="#90b058"/><circle cx="527" cy="13" r="3.5" fill="#88aa50"/><circle cx="516" cy="138" r="2.3" fill="#a8c068"/><circle cx="409" cy="63" r="2.0" fill="#c8d0a8"/><circle cx="604" cy="64" r="4.9" fill="#90b058"/><circle cx="373" cy="111" r="2.3" fill="#88aa50"/><circle cx="267" cy="25" r="3.0" fill="#78a048"/><circle cx="159" cy="87" r="2.8" fill="#88aa50"/><circle cx="218" cy="123" r="4.3" fill="#6c9040"/><circle cx="412" cy="116" r="3.6" fill="#c8d0a8"/><circle cx="329" cy="104" r="4.0" fill="#88aa50"/><circle cx="223" cy="118" r="2.3" fill="#3c5c2a"/><circle cx="59" cy="85" r="1.7" fill="#78a048"/><circle cx="318" cy="33" r="3.0" fill="#90b058"/><circle cx="510" cy="111" r="3.0" fill="#90b058"/><circle cx="55" cy="49" r="2.2" fill="#a8c068"/><circle cx="61" cy="41" r="2.3" fill="#c8d0a8"/><circle cx="217" cy="94" r="3.5" fill="#6c9040"/><circle cx="259" cy="57" r="1.9" fill="#6c9040"/><circle cx="96" cy="-5" r="3.0" fill="#c0d088"/><circle cx="489" cy="137" r="4.5" fill="#90b058"/><circle cx="231" cy="87" r="3.3" fill="#78a048"/><circle cx="118" cy="128" r="3.2" fill="#88aa50"/><circle cx="-0" cy="15" r="3.4" fill="#90b058"/><circle cx="46" cy="102" r="2.4" fill="#78a048"/><circle cx="484" cy="138" r="3.4" fill="#c8d0a8"/><circle cx="463" cy="-7" r="3.2" fill="#6c9040"/><circle cx="53" cy="130" r="2.5" fill="#88aa50"/><circle cx="393" cy="103" r="3.4" fill="#c8d0a8"/><circle cx="104" cy="101" r="1.6" fill="#6c9040"/><circle cx="78" cy="89" r="4.1" fill="#88aa50"/><circle cx="465" cy="132" r="4.5" fill="#90b058"/><circle cx="398" cy="8" r="1.6" fill="#c8d0a8"/><circle cx="111" cy="50" r="4.1" fill="#a8c068"/><circle cx="174" cy="127" r="4.0" fill="#78a048"/><circle cx="17" cy="66" r="1.9" fill="#90b058"/><circle cx="31" cy="12" r="5.0" fill="#b4c878"/><circle cx="200" cy="45" r="2.8" fill="#78a048"/><circle cx="22" cy="75" r="4.6" fill="#78a048"/><circle cx="219" cy="118" r="2.9" fill="#78a048"/><circle cx="294" cy="137" r="4.2" fill="#48683a"/><circle cx="114" cy="44" r="1.6" fill="#88aa50"/><circle cx="295" cy="30" r="2.9" fill="#88aa50"/><circle cx="286" cy="75" r="2.0" fill="#78a048"/><circle cx="446" cy="60" r="3.7" fill="#90b058"/><circle cx="203" cy="105" r="1.7" fill="#90b058"/><circle cx="543" cy="-1" r="3.5" fill="#c0d088"/><circle cx="478" cy="44" r="1.9" fill="#88aa50"/><circle cx="180" cy="10" r="3.4" fill="#c8d0a8"/><circle cx="431" cy="140" r="3.4" fill="#6c9040"/><circle cx="30" cy="88" r="2.3" fill="#78a048"/><circle cx="107" cy="9" r="2.8" fill="#78a048"/><circle cx="146" cy="103" r="2.8" fill="#88aa50"/><circle cx="108" cy="0" r="4.9" fill="#b4c878"/><circle cx="253" cy="102" r="1.8" fill="#34502a"/><circle cx="68" cy="138" r="3.2" fill="#78a048"/><circle cx="241" cy="119" r="2.7" fill="#3c5c2a"/><circle cx="184" cy="121" r="2.7" fill="#6c9040"/><circle cx="563" cy="78" r="4.4" fill="#6c9040"/><circle cx="25" cy="32" r="2.4" fill="#78a048"/><circle cx="272" cy="66" r="4.6" fill="#527038"/><circle cx="398" cy="-9" r="2.7" fill="#b4c878"/><circle cx="161" cy="82" r="3.7" fill="#90b058"/><circle cx="545" cy="80" r="3.1" fill="#9cb860"/><circle cx="545" cy="75" r="1.8" fill="#88aa50"/><circle cx="92" cy="119" r="3.9" fill="#90b058"/><circle cx="48" cy="45" r="2.8" fill="#c0d088"/><circle cx="386" cy="124" r="3.7" fill="#90b058"/><circle cx="285" cy="62" r="1.7" fill="#34502a"/><circle cx="60" cy="92" r="3.8" fill="#3c5c2a"/><circle cx="6" cy="82" r="4.7" fill="#3c5c2a"/><circle cx="536" cy="6" r="2.9" fill="#78a048"/><circle cx="329" cy="99" r="4.3" fill="#34502a"/><circle cx="122" cy="113" r="3.3" fill="#48683a"/><circle cx="490" cy="135" r="4.6" fill="#78a048"/><circle cx="287" cy="107" r="2.5" fill="#48683a"/><circle cx="580" cy="134" r="1.6" fill="#90b058"/><circle cx="443" cy="-9" r="3.8" fill="#a8c068"/><circle cx="94" cy="51" r="4.5" fill="#88aa50"/><circle cx="346" cy="-2" r="2.9" fill="#c8d0a8"/><circle cx="590" cy="60" r="4.3" fill="#90b058"/><circle cx="426" cy="63" r="2.2" fill="#6c9040"/><circle cx="129" cy="69" r="3.0" fill="#88aa50"/><circle cx="450" cy="98" r="3.5" fill="#90b058"/><circle cx="535" cy="4" r="4.8" fill="#c0d088"/><circle cx="530" cy="91" r="4.4" fill="#78a048"/><circle cx="182" cy="18" r="2.0" fill="#90b058"/><circle cx="31" cy="148" r="4.5" fill="#48683a"/><circle cx="304" cy="-7" r="3.8" fill="#c0d088"/><circle cx="364" cy="117" r="4.9" fill="#a8c068"/><circle cx="236" cy="-5" r="3.8" fill="#a8c068"/><circle cx="342" cy="25" r="1.7" fill="#78a048"/><circle cx="191" cy="146" r="3.5" fill="#34502a"/><circle cx="140" cy="128" r="4.4" fill="#88aa50"/><circle cx="378" cy="113" r="4.0" fill="#6c9040"/><circle cx="535" cy="67" r="5.0" fill="#88aa50"/><circle cx="509" cy="38" r="2.4" fill="#78a048"/><circle cx="358" cy="118" r="3.3" fill="#48683a"/><circle cx="527" cy="102" r="3.0" fill="#90b058"/><circle cx="16" cy="116" r="3.6" fill="#34502a"/><circle cx="247" cy="81" r="2.7" fill="#48683a"/><circle cx="536" cy="56" r="2.8" fill="#6c9040"/><circle cx="21" cy="85" r="2.3" fill="#90b058"/><circle cx="187" cy="75" r="2.6" fill="#90b058"/><circle cx="174" cy="118" r="4.4" fill="#90b058"/><circle cx="36" cy="122" r="5.0" fill="#527038"/><circle cx="98" cy="140" r="2.2" fill="#90b058"/><circle cx="292" cy="-2" r="4.3" fill="#9cb860"/><circle cx="398" cy="40" r="2.3" fill="#88aa50"/><circle cx="343" cy="124" r="4.6" fill="#34502a"/><circle cx="588" cy="114" r="4.3" fill="#c0d088"/><circle cx="395" cy="51" r="3.0" fill="#88aa50"/><circle cx="344" cy="145" r="2.2" fill="#78a048"/><circle cx="295" cy="112" r="1.6" fill="#34502a"/><circle cx="409" cy="122" r="2.7" fill="#a8c068"/><circle cx="213" cy="5" r="4.0" fill="#a8c068"/><circle cx="187" cy="29" r="4.4" fill="#b4c878"/><circle cx="385" cy="42" r="1.9" fill="#9cb860"/><circle cx="121" cy="34" r="2.2" fill="#6c9040"/><circle cx="229" cy="41" r="2.1" fill="#6c9040"/><circle cx="613" cy="91" r="2.9" fill="#90b058"/><circle cx="275" cy="8" r="2.5" fill="#a8c068"/><circle cx="159" cy="107" r="4.3" fill="#88aa50"/><circle cx="463" cy="127" r="4.2" fill="#88aa50"/><circle cx="181" cy="125" r="2.0" fill="#527038"/><circle cx="514" cy="63" r="4.3" fill="#6c9040"/><circle cx="461" cy="130" r="2.9" fill="#6c9040"/><circle cx="71" cy="142" r="1.7" fill="#88aa50"/><circle cx="459" cy="6" r="2.5" fill="#9cb860"/><circle cx="397" cy="130" r="3.6" fill="#78a048"/><circle cx="316" cy="106" r="2.7" fill="#3c5c2a"/><circle cx="348" cy="75" r="1.8" fill="#90b058"/><circle cx="427" cy="28" r="4.6" fill="#b4c878"/><circle cx="20" cy="42" r="2.8" fill="#90b058"/><circle cx="34" cy="113" r="2.3" fill="#6c9040"/><circle cx="59" cy="132" r="4.5" fill="#90b058"/><circle cx="359" cy="11" r="1.7" fill="#78a048"/><circle cx="72" cy="143" r="4.8" fill="#527038"/><circle cx="145" cy="136" r="4.9" fill="#88aa50"/><circle cx="420" cy="57" r="2.6" fill="#a8c068"/><circle cx="194" cy="103" r="2.5" fill="#527038"/><circle cx="490" cy="78" r="3.8" fill="#c0d088"/><circle cx="536" cy="76" r="4.7" fill="#88aa50"/><circle cx="608" cy="144" r="1.6" fill="#6c9040"/><circle cx="257" cy="12" r="2.8" fill="#a8c068"/><circle cx="390" cy="33" r="3.8" fill="#6c9040"/><circle cx="290" cy="76" r="5.0" fill="#78a048"/><circle cx="104" cy="30" r="3.5" fill="#c8d0a8"/><circle cx="158" cy="22" r="3.3" fill="#b4c878"/><circle cx="537" cy="123" r="3.8" fill="#6c9040"/><circle cx="563" cy="68" r="2.8" fill="#c0d088"/><circle cx="168" cy="41" r="2.5" fill="#6c9040"/><circle cx="509" cy="7" r="3.3" fill="#c8d0a8"/><circle cx="516" cy="58" r="2.9" fill="#88aa50"/><circle cx="470" cy="45" r="1.6" fill="#88aa50"/><circle cx="375" cy="147" r="2.8" fill="#90b058"/><circle cx="306" cy="88" r="4.9" fill="#48683a"/><circle cx="324" cy="34" r="3.4" fill="#6c9040"/><circle cx="265" cy="117" r="3.0" fill="#3c5c2a"/><circle cx="155" cy="38" r="3.9" fill="#b4c878"/><circle cx="110" cy="12" r="3.5" fill="#9cb860"/><circle cx="333" cy="42" r="4.3" fill="#34502a"/><circle cx="152" cy="-8" r="4.9" fill="#b4c878"/><circle cx="-7" cy="3" r="4.1" fill="#c8d0a8"/><circle cx="432" cy="42" r="4.1" fill="#b4c878"/><circle cx="273" cy="96" r="4.3" fill="#6c9040"/><circle cx="287" cy="59" r="2.8" fill="#48683a"/><circle cx="339" cy="71" r="2.5" fill="#78a048"/><circle cx="463" cy="138" r="2.3" fill="#88aa50"/><circle cx="586" cy="75" r="4.8" fill="#90b058"/><circle cx="572" cy="28" r="2.2" fill="#b4c878"/><circle cx="112" cy="61" r="1.9" fill="#34502a"/></g>
<path d="M112 0 L124 0 L128 100 L114 100Z" fill="#a09c8c" opacity="0.75" filter="url(#bl2)"/>
<path d="M0 40 Q60 50 120 35 Q200 45 260 60" stroke="#9a9a88" stroke-width="2" fill="none" opacity="0.5" filter="url(#bl)"/>
<rect x="0" y="100" width="300" height="3" fill="#8a9080" opacity="0.5"/>
<!-- truck -->
<g filter="url(#bl)">
<rect x="353" y="41" width="174" height="96" fill="#e21812"/>
<rect x="353" y="41" width="174" height="15" fill="#342830"/>
<path d="M353 58 Q358 50 370 52 Q385 47 400 55 Q420 48 440 53 Q455 44 470 52 Q490 46 500 52 Q515 48 527 54 L527 60 L353 62Z" fill="#e8b820"/>
<rect x="525" y="27" width="81" height="143" fill="#dc1616"/>
<rect x="530" y="22" width="62" height="13" fill="#e89028"/>
<rect x="552" y="30" width="54" height="20" fill="#c81818"/>
<path d="M556 36h34M556 41h34M556 46h34" stroke="#f0d0c0" stroke-width="1.2"/>
<path d="M566 61 Q566 58 570 58 L606 58 L606 100 L563 100Z" fill="#2c2c3a"/>
<rect x="353" y="137" width="253" height="33" fill="#d41818"/>
<text x="358" y="88" font-family="Liberation Sans" font-weight="bold" font-style="italic" font-size="19" fill="#f4f0e8" transform="rotate(-4 390 80)">Famous</text>
<text x="374" y="107" font-family="Liberation Sans" font-weight="bold" font-style="italic" font-size="19" fill="#f4f0e8" transform="rotate(-4 400 100)">Dave's</text>
<text x="450" y="72" font-family="Liberation Sans" font-weight="bold" font-style="italic" font-size="9.5" fill="#f0e040">FIRE for HIRE!</text>
<text x="454" y="86" font-family="Liberation Sans" font-weight="bold" font-size="9" fill="#f4f0e8">830-222-RIBS</text>
<text x="454" y="104" font-family="Liberation Sans" font-weight="bold" font-size="8" fill="#f0e040">WE</text>
<text x="451" y="121" font-family="Liberation Sans" font-weight="bold" font-size="19" fill="#f0e040">CATER</text>
<rect x="480" y="126" width="36" height="11" fill="#f0e040"/>
<text x="550" y="118" font-family="Liberation Sans" font-weight="bold" font-size="15" fill="#f0e040">PIT</text>
<text x="549" y="134" font-family="Liberation Sans" font-weight="bold" font-size="14" fill="#f0e040">CREW</text>
<text x="550" y="151" font-family="Liberation Sans" font-weight="bold" font-size="9" fill="#f0e040">WINNER OF OV</text>
</g>
<!-- road -->
<g filter="url(#bl)">
<rect x="460" y="165" width="150" height="60" fill="#c8c8c0"/>
<rect x="530" y="212" width="80" height="22" fill="#8c8c84"/>
<rect x="260" y="228" width="300" height="20" fill="#34343a"/><rect x="560" y="234" width="50" height="14" fill="#a8a8a4"/>
<rect x="355" y="234" width="110" height="3" fill="#c0c0c0"/>
</g>
<!-- left dark car -->
<path d="M-10 112 Q18 108 32 126 L32 140 L-10 142Z" fill="#283040" filter="url(#bl)"/>
<!-- blue car -->
<g filter="url(#bl)">
<path d="M-10 142 L10 136 L60 124 L142 94 L238 91 L300 100 L344 126 L370 136 L516 140 L556 154 L570 175 L572 200 L565 224 L474 232 L334 236 L294 230 L234 225 L194 222 L94 220 L34 217 L-10 212Z" fill="url(#bluecar)"/>
<path d="M300 100 L344 126 L370 136 L516 140 L556 154 L570 175 L572 200 L565 224 L474 232 L334 236 L294 230Z" fill="url(#frontdark)"/>
<path d="M7 137 L107 104 L199 106 L196 122 L185 134 L7 142Z" fill="#475a6e"/>
<path d="M107 99 L190 96 L199 106 L107 104Z" fill="#c0c4d0" opacity="0.8"/>
<path d="M227 109 L311 108 L344 146 L252 143 Z" fill="#68787a"/><path d="M300 106 L311 108 L344 146 L336 146Z" fill="#283040"/>
<path d="M228 106 L244 144 L236 144 L222 110Z" fill="#141828"/>
<circle cx="214" cy="131" r="9" fill="#c8ccd8" stroke="#1a2060" stroke-width="2"/>
<path d="M-10 146 L37 144 L37 172 L-10 176Z" fill="#d0d4dc"/>
<path d="M-10 157 L37 156" stroke="#2a40b0" stroke-width="4"/>
<path d="M30 144 L160 150 L215 165 L200 170 L40 168Z" fill="#1a2a88" opacity="0.7"/>
<path d="M61 174 Q62 167 80 166 L136 168 Q142 175 136 183 L70 184 Q60 182 61 174Z" fill="#c81c28"/>
<rect x="61" y="186" width="20" height="8" fill="#d8d8e0"/>
<rect x="81" y="186" width="31" height="8" fill="#d89020"/>
<circle cx="252" cy="214" r="43" fill="#0e1230"/>
<circle cx="250" cy="212" r="38" fill="#141418"/>
<circle cx="250" cy="212" r="28" fill="#c4c4c8"/>
<g stroke="#505058" stroke-width="5"><path d="M250 212 L250 188 M250 212 L273 205 M250 212 L264 232 M250 212 L236 232 M250 212 L227 205"/></g>
<circle cx="250" cy="212" r="7" fill="#a0a0a8"/>
<path d="M344 135 L520 142 L556 156 L545 168 L420 162 L344 150Z" fill="#2a3cb0" opacity="0.8"/>
<circle cx="516" cy="205" r="42" fill="#0e1230"/>
<circle cx="514" cy="203" r="37" fill="#141418"/>
<ellipse cx="524" cy="201" rx="23" ry="32" fill="#c8c8cc"/>
<g stroke="#505058" stroke-width="4.5"><path d="M524 201 L524 176 M524 201 L543 193 M524 201 L537 222 M524 201 L511 222 M524 201 L505 193"/></g>
<circle cx="524" cy="201" r="6" fill="#9a9aa2"/>
<rect x="344" y="125" width="24" height="24" rx="4" fill="#2038a8"/>
<path d="M300 236 L470 232 L470 240 L300 242Z" fill="#0e1240"/>
<circle cx="312" cy="230" r="7" fill="#d0d0d8"/><circle cx="312" cy="230" r="4" fill="#202028"/>
<text x="440" y="185" font-family="Liberation Sans" font-style="italic" font-weight="bold" font-size="8.5" fill="#d8d8e8">VIPER GTS</text><path d="M384 153 Q445 160 432 212 L412 214 Q425 172 376 160Z" fill="#141a50"/><path d="M271 146 Q312 170 316 214" stroke="#10144a" stroke-width="1.2" fill="none"/><path d="M232 143 L400 150" stroke="#3a58d0" stroke-width="6" opacity="0.5"/>
<rect x="550" y="172" width="22" height="50" fill="#2a2e80"/>
</g>
<!-- red foreground car -->
<g filter="url(#bl3)">
<path d="M-30 200 L64 219 L214 219 L277 236 L394 243 L640 249 L640 390 L-30 390Z" fill="url(#redcar)"/>
<path d="M-30 300 L640 296 L640 390 L-30 390Z" fill="#a81028" opacity="0.55"/>
<path d="M-30 270 L640 268 L640 300 L-30 302Z" fill="#d41c40" opacity="0.5"/>
<path d="M430 390 Q440 310 490 285 Q560 255 640 258 L640 390Z" fill="#d42852"/>
<path d="M466 390 Q480 320 530 302 Q590 292 640 300 L640 390Z" fill="#0c0c0c"/>
<path d="M560 390 Q580 350 640 350 L640 390Z" fill="#505050"/>
<path d="M-30 172 L4 180 L142 284 L126 296 L-30 204Z" fill="#e4e0e8" opacity="0.85"/>
<path d="M-30 230 L60 230 L120 300 L-30 320Z" fill="#e0a0b8" opacity="0.5"/>
<path d="M-30 282 L20 276 L28 312 L-30 318Z" fill="#383040" opacity="0.55"/>
<rect x="316" y="347" width="60" height="24" fill="#383038"/>
<path d="M325 350v20M340 350v20M355 350v20" stroke="#b0a8b0" stroke-width="5"/>
<path d="M96 300 L100 367" stroke="#801020" stroke-width="3"/>
</g>
</g>
</defs>
</svg>
<!-- TITLE BAR -->
<div class="a" style="left:0;top:0;width:1279px;height:18px;background:linear-gradient(to right,#0A246A,#A6CAF0)"></div>
<svg style="left:1px;top:1px" width="16" height="16"><defs><linearGradient id="ig" x1="0" y1="0" x2="0" y2="1"><stop offset="0" stop-color="#9aa4ac"/><stop offset="0.45" stop-color="#5a7080"/><stop offset="1" stop-color="#00a8e8"/></linearGradient></defs><circle cx="8" cy="7.8" r="6.8" fill="url(#ig)" stroke="#061848" stroke-width="0.6"/><rect x="4" y="5.5" width="8.5" height="5.5" fill="#201c1c"/><path d="M6.5 7 L8.5 9" stroke="#90e0a0" stroke-width="1.2"/><path d="M8.5 9.5 L10.5 8" stroke="#b8a0e8" stroke-width="1.2"/></svg>
<div class="t" style="left:18px;top:2px;color:#fff;font-weight:bold;font-size:12px;line-height:14px">Untitled * - Sony Vegas Pro 8.0</div>
<div class="btn" style="left:1227px;top:2px;width:16px;height:14px"></div>
<div class="a" style="left:1231px;top:11px;width:6px;height:2px;background:#000"></div>
<div class="btn" style="left:1243px;top:2px;width:16px;height:14px"></div>
<svg style="left:1243px;top:2px" width="16" height="14"><path d="M5.5 4.5V2.5H11.5V7.5H9.5" stroke="#000" fill="none"/><rect x="5" y="2" width="7" height="2" fill="#000"/><path d="M3.5 6.5H9.5V11.5H3.5Z" stroke="#000" fill="none"/><rect x="3" y="6" width="7" height="2" fill="#000"/></svg>
<div class="btn" style="left:1261px;top:2px;width:16px;height:14px"></div>
<svg style="left:1261px;top:2px" width="16" height="14"><path d="M4 3 L11 10 M11 3 L4 10" stroke="#000" stroke-width="1.6"/></svg>

<!-- MENU -->
<div class="t" style="left:5px;top:22px">File</div>
<div class="t" style="left:32px;top:22px">Edit</div>
<div class="t" style="left:62px;top:22px">View</div>
<div class="t" style="left:96px;top:22px">Insert</div>
<div class="t" style="left:137px;top:22px">Tools</div>
<div class="t" style="left:174px;top:22px">Options</div>
<div class="t" style="left:223px;top:22px">Help</div>
<div class="a" style="left:2px;top:38px;width:1274px;height:1px;background:#808080"></div>
<div class="a" style="left:2px;top:39px;width:1274px;height:1px;background:#fff"></div>

<!-- MAIN TOOLBAR -->
<svg style="left:6px;top:44px" width="16" height="16"><defs><linearGradient id="pg" x1="0" y1="0" x2="1" y2="1"><stop offset="0" stop-color="#f4f6fa"/><stop offset="1" stop-color="#b8c0d0"/></linearGradient></defs><path d="M1.5 0.5h8l3.5 3.5v10.5h-11.5z" fill="url(#pg)" stroke="#8a8ae0"/><path d="M9.5 0.5v3.5h3.5" fill="#c0c4f0" stroke="#8a8ae0"/></svg>
<svg style="left:30px;top:45px" width="17" height="15"><path d="M0.5 2.5h5l1.5 1.5h8.5v10h-15z" fill="#d8cca0" stroke="#8c7c50"/><path d="M0.5 6.5h15" stroke="#b0a070"/><rect x="1" y="7" width="14" height="7" fill="#c8b888"/></svg>
<svg style="left:55px;top:44px" width="15" height="15"><rect x="0.5" y="0.5" width="13" height="14" rx="1.5" fill="#5a5a5c" stroke="#707074"/><rect x="3" y="1" width="8" height="6" fill="#fff"/><rect x="3" y="10" width="8" height="4" fill="#111"/><rect x="8" y="11" width="2" height="3" fill="#fff"/></svg>
<svg style="left:79px;top:45px" width="15" height="15"><rect x="0.5" y="0.5" width="13" height="13" rx="2" fill="#e6e8f0" stroke="#8888e8"/><path d="M3 4h3M3 6.5h3M3 9h3M3 11.5h3" stroke="#555"/><path d="M7 4 L7 11 L9 9.5 L10.5 12.5 L12 12 L10.5 9 L13 9Z" fill="#111"/></svg>
<div class="sep" style="left:102px;top:43px;height:17px"></div>
<svg style="left:110px;top:44px" width="15" height="16"><path d="M3 0 L9 10 M11 0 L5 10" stroke="#a0a0a0" stroke-width="1.5"/><circle cx="4" cy="12.5" r="2.5" fill="none" stroke="#a0a0a0" stroke-width="1.4"/><circle cx="10.5" cy="12.5" r="2.5" fill="none" stroke="#a0a0a0" stroke-width="1.4"/></svg>
<svg style="left:134px;top:44px" width="15" height="16"><rect x="0.5" y="0.5" width="8" height="9" fill="#e8e8e8" stroke="#a8a8a8"/><rect x="5.5" y="5.5" width="8" height="9" fill="#e0e0e0" stroke="#a8a8a8"/><path d="M7 8h5M7 10h5M7 12h5" stroke="#b0b0b0"/></svg>
<svg style="left:158px;top:44px" width="15" height="16"><rect x="0.5" y="2.5" width="11" height="12" rx="1" fill="#b8b8b8" stroke="#909090"/><rect x="3" y="0.5" width="6" height="3" fill="#d8d8d8" stroke="#909090"/><rect x="5.5" y="6.5" width="8" height="8" fill="#e8e8e8" stroke="#a0a0a0"/></svg>
<div class="sep" style="left:182px;top:43px;height:17px"></div>
<svg style="left:190px;top:45px" width="17" height="14"><path d="M1 6 L6 1.5 L6 4 Q13 3 15 9 Q11 6 6 7.5 L6 10Z" fill="#b8c0f4" stroke="#8a90e8" stroke-linejoin="round"/><circle cx="13" cy="11" r="2" fill="#a8a8a8" stroke="#606060"/></svg>
<svg style="left:213px;top:50px" width="7" height="4"><path d="M0 0h6l-3 3z" fill="#000"/></svg>
<svg style="left:226px;top:45px" width="17" height="14"><path d="M16 6 L11 1.5 L11 4 Q4 3 2 9 Q6 6 11 7.5 L11 10Z" fill="#e8e8e8" stroke="#c0c0c0" stroke-linejoin="round"/><circle cx="3.5" cy="11" r="2" fill="#e0e0e0" stroke="#b0b0b0"/></svg>
<svg style="left:250px;top:50px" width="7" height="4"><path d="M0 0h6l-3 3z" fill="#a0a0a0"/></svg>
<div class="sep" style="left:264px;top:43px;height:17px"></div>
<div class="press" style="left:268px;top:41px;width:23px;height:21px"></div>
<svg style="left:272px;top:44px" width="16" height="15"><path d="M1 5h7M4.5 1.5v7" stroke="#1c9a40" stroke-width="1.2"/><path d="M2 2l5 6M7 2L2 8" stroke="#40a8e0" stroke-width="0.9"/><path d="M6 3 L14 8 L11 9 L14 12.5 L12.5 14 L9.5 10.5 L7.5 12.5Z" fill="#c0ccf8" stroke="#3a3a7a"/></svg>
<div class="press" style="left:292px;top:41px;width:23px;height:21px"></div>
<svg style="left:296px;top:44px" width="15" height="15"><path d="M1.5 1.5 L1.5 13.5 L13.5 13.5 L13.5 1.5 L7.5 9Z" fill="#a8b4f0" stroke="#3444c8"/><path d="M1.5 1.5 L7.5 9 L1.5 13.5" fill="#7080e0"/></svg>
<svg style="left:320px;top:44px" width="17" height="16"><path d="M5.5 0v3 M5.5 10v5 M3 15h3" stroke="#707070"/><rect x="0.5" y="8.5" width="4" height="6" fill="#c0c0c0" stroke="#808080"/><rect x="6.5" y="6.5" width="9" height="8" fill="#b8e8b8" stroke="#6a9ac8"/><path d="M7 3.5h9M7 3.5l3-2.5M7 3.5l3 2.5" stroke="#333" stroke-width="1.2"/></svg>
<svg style="left:343px;top:50px" width="7" height="4"><path d="M0 0h6l-3 3z" fill="#000"/></svg>
<div class="press" style="left:353px;top:41px;width:24px;height:21px"></div>
<svg style="left:357px;top:44px" width="16" height="16"><path d="M2.5 9.5 L6.5 4 L11.5 7 L14 3" stroke="#3458b0" stroke-width="1.2" fill="none"/><circle cx="2.5" cy="9.5" r="2" fill="#fff" stroke="#2a4a90"/><circle cx="6.5" cy="4" r="2" fill="#fff" stroke="#2a4a90"/><circle cx="12" cy="7" r="2" fill="#fff" stroke="#2a4a90"/><circle cx="14" cy="3" r="1.5" fill="#fff" stroke="#2a4a90"/><rect x="6" y="10.5" width="6" height="5" fill="#223" /><path d="M7 10.5 v-1.5 a2 2 0 0 1 4 0 v1.5" stroke="#223" fill="none" stroke-width="1.2"/></svg>
<svg style="left:382px;top:44px" width="17" height="16"><rect x="0.5" y="0.5" width="7" height="7" fill="#b8e8b0" stroke="#80a8d0"/><rect x="8.5" y="8.5" width="7" height="7" fill="#b8e8b0" stroke="#80a8d0"/><rect x="4" y="7" width="8" height="6" fill="#505058"/><path d="M9 7 v-2 a2.5 2.5 0 0 1 5 0" stroke="#404048" fill="none" stroke-width="1.5"/></svg>
<div class="sep" style="left:405px;top:43px;height:17px"></div>
<div class="press" style="left:410px;top:41px;width:23px;height:21px"></div>
<svg style="left:413px;top:44px" width="17" height="16"><path d="M0 8h3l1.5-4 2 8 2-6 1.5 3 1.5-1 h5" stroke="#2090d8" stroke-width="1.5" fill="none"/><path d="M8 1h4M10 1v14M8 15h4" stroke="#111" stroke-width="1.4"/></svg>
<svg style="left:437px;top:44px" width="17" height="16"><path d="M3 4 L7 11 L11 6 L14 12" stroke="#555" fill="none"/><circle cx="3" cy="3.5" r="2.2" fill="#fff" stroke="#333"/><circle cx="7" cy="11" r="2.2" fill="#fff" stroke="#333"/><circle cx="11" cy="6" r="2.2" fill="#fff" stroke="#333"/><circle cx="14" cy="12.5" r="2.2" fill="#fff" stroke="#333"/></svg>
<svg style="left:460px;top:44px" width="16" height="16"><rect x="0.5" y="0.5" width="15" height="15" fill="none" stroke="#333" stroke-dasharray="1 1"/><path d="M4 3 L12 8 L9 9 L11.5 12.5 L10 13.5 L7.5 10 L5 12Z" fill="#c8d0f8" stroke="#333"/></svg>
<svg style="left:484px;top:44px" width="16" height="16"><rect x="0.5" y="0.5" width="15" height="15" fill="none" stroke="#333" stroke-dasharray="1 1"/><circle cx="7" cy="7" r="4" fill="#dde4f8" stroke="#333" stroke-width="1.2"/><path d="M10 10 L13 13" stroke="#333" stroke-width="2"/></svg>
<div class="sep" style="left:509px;top:43px;height:17px"></div>
<svg style="left:517px;top:43px" width="16" height="17"><path d="M5 8 L11 1.5 Q13 1 13.5 3 L9 8 L14 6 L14 9 L8 13 L5 12Z" fill="#f4f4f4" stroke="#333"/><path d="M0.5 12 L4 9 L7 12 L3.5 15.5Z" fill="#2858c8" stroke="#183880"/></svg>
<div class="sep" style="left:541px;top:43px;height:17px"></div>
<svg style="left:549px;top:44px" width="18" height="16"><path d="M1 3 L9 9 L6 9.5 L8 13 L6.5 14 L4.5 10.5 L2 12.5Z" fill="#e8ecf8" stroke="#333"/><path d="M10.5 4 Q10.5 1 13 1 Q15.5 1 15.5 3.5 Q15.5 5 13.5 6 L13 8" stroke="#333" stroke-width="1.4" fill="none"/><rect x="12.2" y="9.5" width="1.6" height="1.6" fill="#333"/></svg>
<!-- PANEL FRAMES -->
<div class="a" style="left:2px;top:65px;width:439px;height:704px;border-top:1px solid #808080;border-left:1px solid #808080;border-right:1px solid #fff;border-bottom:1px solid #fff"></div>
<div class="a" style="left:446px;top:65px;width:200px;height:704px;border-top:1px solid #808080;border-left:1px solid #808080;border-right:1px solid #fff;border-bottom:1px solid #fff"></div>
<div class="a" style="left:650px;top:65px;width:628px;height:704px;border-top:1px solid #808080;border-left:1px solid #808080;border-right:1px solid #fff;border-bottom:1px solid #fff"></div>

<!-- EXPLORER -->
<svg style="left:6px;top:69px" width="9" height="24"><path d="M1.5 1.5 L7.5 7 M7.5 1.5 L1.5 7" stroke="#3a3a48" stroke-width="1.6"/><path d="M7 13 L2 17.5 L7 22Z" fill="#3a3e48"/></svg>
<div class="gd" style="left:8px;top:100px"></div><div class="gd" style="left:8px;top:105px"></div><div class="gd" style="left:8px;top:110px"></div><div class="gd" style="left:8px;top:115px"></div><div class="gd" style="left:8px;top:120px"></div><div class="gd" style="left:8px;top:125px"></div>
<div class="a" style="left:18px;top:69px;width:148px;height:21px;border-top:1px solid #808080;border-left:1px solid #808080;border-bottom:1px solid #fff;border-right:1px solid #fff"></div>
<div class="a" style="left:19px;top:70px;width:146px;height:19px;background:#fff;border-top:1px solid #404040;border-left:1px solid #404040;border-bottom:1px solid #D4D0C8;border-right:1px solid #D4D0C8"></div>
<svg style="left:21px;top:72px" width="17" height="14"><path d="M0.5 2.5 Q0.5 1 2 1 L6 1 L7.5 3 L13 3 Q14 3 14 4 L14 12.5 L1 12.5 Z" fill="#f0c838" stroke="#a87818"/><path d="M1 12.5 L3 6 L16 6 L14 12.5Z" fill="#fde878" stroke="#b08020"/></svg>
<div class="t" style="left:40px;top:73px">Matrox</div>
<div class="btn" style="left:148px;top:71px;width:16px;height:17px"></div>
<svg style="left:151px;top:77px" width="9" height="5"><path d="M0 0h7l-3.5 4z" fill="#000"/></svg>
<svg style="left:171px;top:72px" width="17" height="15"><path d="M0.5 2.5 Q0.5 1 2 1 L5.5 1 L6.5 2.5 L15 2.5 L15.5 13.5 L0.5 13.5Z" fill="#dccb98" stroke="#a0843c"/><rect x="2" y="1.5" width="4" height="2" fill="#f4ecc0"/><path d="M5 6 L2.5 9 L4.5 9 Q4.5 12 13 12" stroke="#2a3868" stroke-width="1.4" fill="none"/><path d="M2 9 L5 5.5 L7.5 9Z" fill="#2a3868"/></svg>
<svg style="left:196px;top:71px" width="14" height="16"><rect x="0.5" y="0.5" width="13" height="15" rx="2" fill="#d8dcec" stroke="#8a8ae8"/><path d="M3.5 8 A4 4 0 0 1 10 5" stroke="#2a3060" stroke-width="1.5" fill="none"/><path d="M10.5 8 A4 4 0 0 1 4 11" stroke="#2a3060" stroke-width="1.5" fill="none"/><path d="M8 3 L11.5 5 L9 7Z M6 13 L2.5 11 L5 9Z" fill="#2a3060"/></svg>
<div class="sep" style="left:217px;top:70px;height:17px"></div>
<svg style="left:225px;top:71px" width="17" height="16"><path d="M0.5 4.5 L5 4.5 L6 3.5 L11 3.5 L11 14.5 L0.5 14.5Z" fill="#dccb98" stroke="#a0843c"/><path d="M6 8h10M11 3v11" stroke="#209030" stroke-width="1.3"/><path d="M8 5l6 6M14 5l-6 6" stroke="#8090f0" stroke-width="0.8"/></svg>
<svg style="left:250px;top:73px" width="13" height="14"><path d="M1.5 1.5 L11.5 12.5 M11.5 1.5 L1.5 12.5" stroke="#c03058" stroke-width="2.2"/></svg>
<svg style="left:271px;top:72px" width="17" height="15"><path d="M0.5 2.5 L5 2.5 L6 1 L10 1 L10 2.5 L15.5 2.5 L15.5 13.5 L0.5 13.5Z" fill="#d0d0d0" stroke="#b0b0b0"/></svg>
<div class="sep" style="left:294px;top:70px;height:17px"></div>
<svg style="left:304px;top:73px" width="14" height="14"><path d="M0.5 0.5 L13 6.5 L0.5 12.5Z" fill="#a8acb8" stroke="#8a8e98"/></svg>
<svg style="left:328px;top:74px" width="12" height="12"><rect x="0.5" y="0.5" width="10" height="10" fill="#9a9ea8" stroke="#7a7e88"/></svg>
<div class="press" style="left:345px;top:68px;width:23px;height:22px"></div>
<svg style="left:349px;top:71px" width="16" height="16"><path d="M8 0.5v9" stroke="#333"/><path d="M8.5 0.5 L14.5 3 L8.5 5.5Z" fill="#109050"/><path d="M1 5 L9 10 L6 10.5 L8 14 L6.5 15 L4.5 11.5 L2 13.5Z" fill="#c8d0f8" stroke="#333"/></svg>
<div class="sep" style="left:372px;top:70px;height:17px"></div>
<svg style="left:379px;top:71px" width="16" height="16"><rect x="0.5" y="0.5" width="12" height="10" fill="#5a4838" stroke="#333"/><circle cx="9" cy="10" r="5.5" fill="#e8e8ec" stroke="#555"/><circle cx="9" cy="10" r="1.5" fill="#888"/></svg>
<svg style="left:402px;top:71px" width="16" height="16"><circle cx="7.5" cy="6.5" r="5.5" fill="#d84030"/><ellipse cx="7.5" cy="13.5" rx="5" ry="2" fill="#c85040"/><circle cx="6" cy="5" r="1.5" fill="#f0a090"/></svg>
<svg style="left:425px;top:71px;overflow:hidden" width="12" height="16"><circle cx="8.5" cy="8" r="7" fill="#9090e0"/><path d="M3 4 Q6 6 4 9 Q2 11 4 13 M8 1.5 Q10 4 8 6" stroke="#30a070" stroke-width="2.5" fill="none"/><circle cx="10" cy="9.5" r="4.2" fill="#e0e4f0" stroke="#505870" stroke-width="0.8"/></svg>

<div class="a" style="left:18px;top:94px;width:418px;height:358px;border-top:1px solid #808080;border-left:1px solid #808080;border-bottom:1px solid #fff;border-right:1px solid #fff"></div>
<div class="a" style="left:19px;top:95px;width:416px;height:356px;background:#fff;border-top:1px solid #404040;border-left:1px solid #404040;border-bottom:1px solid #D4D0C8;border-right:1px solid #D4D0C8"></div>
<svg style="left:20px;top:96px" width="16" height="16"><rect x="3.5" y="0.5" width="11.5" height="15" rx="1" fill="#c8d8f4" stroke="#5a6a90"/><rect x="4.5" y="1.5" width="7" height="2" fill="#f0f4ff"/><g fill="none" stroke-width="2.2"><path d="M2 9 A5 5 0 0 1 7 4" stroke="#f04030"/><path d="M7 4 A5 5 0 0 1 12 9" stroke="#30b040"/><path d="M12 9 A5 5 0 0 1 7 14" stroke="#f0b010"/><path d="M7 14 A5 5 0 0 1 2 9" stroke="#3070e0"/></g><circle cx="7" cy="9" r="3.8" fill="#e8f0ff"/><path d="M5.5 7 L9.5 9 L5.5 11Z" fill="#001880"/></svg>
<div class="a" style="left:36px;top:96px;width:161px;height:16px;background:#D4D0C8"></div>
<div class="t" style="left:37px;top:99px;letter-spacing:-0.07px">Vipers_Matrox_iframe_codec.avi</div>
<div class="t" style="left:18px;top:453px;letter-spacing:-0.2px">Video: 1280x720x24, 10.000 fps progressive, 00:00:00;02, Matrox MPEG-2 I-frame HD</div>

<div class="a" style="left:18px;top:484px;width:418px;height:262px;border-top:1px solid #808080;border-left:1px solid #808080;border-bottom:1px solid #fff;border-right:1px solid #fff"></div>
<div class="a" style="left:19px;top:485px;width:416px;height:260px;background:#fff;border-top:1px solid #404040;border-left:1px solid #404040;border-bottom:1px solid #D4D0C8;border-right:1px solid #D4D0C8"></div>
<div class="a" style="left:20px;top:486px;width:414px;height:16px;background:#D4D0C8;border-top:1px solid #fff;border-left:1px solid #fff;border-bottom:1px solid #404040;box-shadow:inset 0 -1px 0 #808080"></div>
<div class="t" style="left:25px;top:489px">Region</div>
<div class="t" style="left:25px;top:504px">No regions to display</div>
<div class="a chk" style="left:20px;top:728px;width:414px;height:16px"></div>
<div class="btn" style="left:20px;top:728px;width:16px;height:16px"></div>
<svg style="left:25px;top:732px" width="5" height="8"><path d="M4 0v7L0 3.5z" fill="#000"/></svg>
<div class="btn" style="left:36px;top:728px;width:112px;height:16px"></div>
<div class="btn" style="left:418px;top:728px;width:16px;height:16px"></div>
<svg style="left:424px;top:732px" width="5" height="8"><path d="M0 0v7L4 3.5z" fill="#000"/></svg>

<div class="a" style="left:4px;top:748px;width:435px;height:19px;background:#929292"></div>
<svg style="left:4px;top:748px" width="300" height="19">
<path d="M0 0 L122 0 L126 18 L9 18Z" fill="#C6C3BC"/>
<path d="M0 0 L9 18" stroke="#808080"/><path d="M122 0 L126 18" stroke="#808080"/>
<path d="M190 0 L290 0 L285 18 L185 18Z" fill="#C6C3BC"/>
<path d="M290 0 L285 18" stroke="#808080"/>
<path d="M119 -1 L192 -1 L183 18 L127 18Z" fill="#D4D0C8"/>
<path d="M119 0 L127 18" stroke="#808080"/><path d="M192 0 L183 18" stroke="#fff"/>
<path d="M9 18.5 L290 18.5" stroke="#808080"/>
</svg>
<div class="t" style="left:24px;top:750px;letter-spacing:-0.15px">Media Generators</div>
<div class="t" style="left:136px;top:750px;font-weight:bold">Explorer</div>
<div class="t" style="left:207px;top:750px;">Project Media</div>
<!-- SCOPES -->
<svg style="left:449px;top:69px" width="9" height="24"><path d="M1.5 1.5 L7.5 7 M7.5 1.5 L1.5 7" stroke="#3a3a48" stroke-width="1.6"/><path d="M7 13 L2 17.5 L7 22Z" fill="#3a3e48"/></svg>
<div class="gd" style="left:452px;top:100px"></div><div class="gd" style="left:452px;top:105px"></div><div class="gd" style="left:452px;top:110px"></div><div class="gd" style="left:452px;top:115px"></div><div class="gd" style="left:452px;top:120px"></div><div class="gd" style="left:452px;top:125px"></div>
<div class="a" style="left:463px;top:69px;width:178px;height:22px;border-top:1px solid #808080;border-left:1px solid #808080;border-bottom:1px solid #fff;border-right:1px solid #fff"></div>
<div class="a" style="left:464px;top:70px;width:176px;height:20px;background:#fff;border-top:1px solid #404040;border-left:1px solid #404040;border-bottom:1px solid #D4D0C8;border-right:1px solid #D4D0C8"></div>
<div class="a" style="left:466px;top:73px;width:61px;height:15px;background:#0A246A"></div>
<div class="t" style="left:466px;top:74px;color:#fff;letter-spacing:-0.2px">Vectorscope</div>
<div class="a" style="left:462px;top:94px;width:178px;height:1px;background:#808080"></div>
<div class="a" style="left:462px;top:95px;width:178px;height:1px;background:#fff"></div>
<div class="t" style="left:463px;top:104px;letter-spacing:-0.2px">Vectorscope</div>
<div class="t" style="left:554px;top:104px;letter-spacing:-0.3px">Normal</div>
<svg style="left:610px;top:109px" width="7" height="4"><path d="M0 0h6l-3 3z" fill="#000"/></svg>
<div class="a" style="left:462px;top:123px;width:177px;height:623px;background:#000;border-top:1px solid #505050;border-left:1px solid #505050"></div>
<svg style="left:0;top:0" width="1279" height="996">
<defs><filter id="sbl" x="-20%" y="-20%" width="140%" height="140%"><feGaussianBlur stdDeviation="0.6"/></filter><clipPath id="scc"><rect x="463" y="124" width="176" height="622"/></clipPath></defs>
<g clip-path="url(#scc)"><path d="M550.5 124 V413 M550.5 457 V746 M463 435.5 H528 M572 435.5 H639" stroke="#DC9A10" stroke-width="1"/>

<g fill="none" stroke="#DC9A10" stroke-width="1.3"><circle cx="550.5" cy="435" r="14.5" /><circle cx="550.5" cy="435" r="29" /><circle cx="550.5" cy="435" r="43.5" /><circle cx="550.5" cy="435" r="58" /><circle cx="550.5" cy="435" r="72.5" /></g>
<g fill="none" stroke="#48A820" stroke-width="1.3"><g transform="translate(533.6 369.1) rotate(-14.4)"><rect x="-13" y="-13" width="26" height="26" stroke-dasharray="9 8 9 0"/></g><!-- x="533.6" y="373.1" text-anchor="middle">R--><g transform="translate(581.0 379.0) rotate(28.6)"><rect x="-13" y="-13" width="26" height="26" stroke-dasharray="9 8 9 0"/></g><!-- x="581.0" y="383.0" text-anchor="middle">Mg--><g transform="translate(597.0 446.6) rotate(-256.0)"><rect x="-13" y="-13" width="26" height="26" stroke-dasharray="9 8 9 0"/></g><!-- x="597.0" y="450.6" text-anchor="middle">B--><g transform="translate(568.1 500.7) rotate(-195.0)"><rect x="-13" y="-13" width="26" height="26" stroke-dasharray="9 8 9 0"/></g><!-- x="568.1" y="504.7" text-anchor="middle">Cy--><g transform="translate(517.2 490.5) rotate(-149.0)"><rect x="-13" y="-13" width="26" height="26" stroke-dasharray="9 8 9 0"/></g><!-- x="517.2" y="494.5" text-anchor="middle">G--><g transform="translate(503.4 423.3) rotate(-76.0)"><rect x="-13" y="-13" width="26" height="26" stroke-dasharray="9 8 9 0"/></g><!-- x="503.4" y="427.3" text-anchor="middle">Yl--></g>
<g fill="#48A820" font-family="Liberation Sans" font-size="10"><text x="533.6" y="373.1" text-anchor="middle">R</text><text x="581.0" y="383.0" text-anchor="middle">Mg</text><text x="597.0" y="450.6" text-anchor="middle">B</text><text x="568.1" y="504.7" text-anchor="middle">Cy</text><text x="517.2" y="494.5" text-anchor="middle">G</text><text x="503.4" y="427.3" text-anchor="middle">Yl</text></g>

<path d="M533.5 355 L531.5 364 L540 389 L543 410 L540 423 L533 430 L533 440 L541 446 L555 452 L567 460 L579 464 L582 461 L572 450 L561 439 L555 427 L551 412 L547 389 L545.5 375 L537 358Z" fill="#d0d0d0" filter="url(#sbl)"/><ellipse cx="546.5" cy="438" rx="10.5" ry="11" fill="#d4d4d4" filter="url(#sbl)"/><path d="M530 432v2M529 433h2M524 385v2M523 386h2M527 416v2M526 417h2M516 449v2M515 450h2M530 373v2M529 374h2M527 426v2M526 427h2M517 419v2M516 420h2M519 391v2M518 392h2M538 407v2M537 408h2M518 407v2M517 408h2M520 417v2M519 418h2M513 434v2M512 435h2M519 395v2M518 396h2M526 435v2M525 436h2M527 391v2M526 392h2M521 384v2M520 385h2M529 440v2M528 441h2M523 401v2M522 402h2M530 437v2M529 438h2M517 405v2M516 406h2M525 431v2M524 432h2M524 389v2M523 390h2M525 393v2M524 394h2M519 436v2M518 437h2M532 434v2M531 435h2M520 429v2M519 430h2M516 408v2M515 409h2M531 417v2M530 418h2M515 425v2M514 426h2M524 439v2M523 440h2M531 438v2M530 439h2M519 423v2M518 424h2M519 442v2M518 443h2M526 412v2M525 413h2M512 441v2M511 442h2M533 430v2M532 431h2M534 377v2M533 378h2M536 417v2M535 418h2M532 401v2M531 402h2M530 435v2M529 436h2M530 430v2M529 431h2M523 423v2M522 424h2M514 427v2M513 428h2M530 365v2M529 366h2M524 383v2M523 384h2M524 398v2M523 399h2M529 418v2M528 419h2M515 448v2M514 449h2M516 400v2M515 401h2M530 370v2M529 371h2M527 394v2M526 395h2M538 401v2M537 402h2M538 423v2M537 424h2M529 415v2M528 416h2M529 395v2M528 396h2M509 415v2M508 416h2M530 375v2M529 376h2M530 447v2M529 448h2M520 402v2M519 403h2M529 386v2M528 387h2M522 392v2M521 393h2M516 407v2M515 408h2M510 421v2M509 422h2M523 389v2M522 390h2M536 385v2M535 386h2M529 407v2M528 408h2M531 419v2M530 420h2M535 390v2M534 391h2M526 393v2M525 394h2M517 412v2M516 413h2M524 396v2M523 397h2M535 418v2M534 419h2M523 449v2M522 450h2M522 416v2M521 417h2M533 422v2M532 423h2M524 449v2M523 450h2M520 399v2M519 400h2M517 441v2M516 442h2M533 403v2M532 404h2M516 436v2M515 437h2M524 414v2M523 415h2M525 393v2M524 394h2M511 417v2M510 418h2M514 440v2M513 441h2M537 425v2M536 426h2M533 374v2M532 375h2M511 420v2M510 421h2M530 365v2M529 366h2M528 432v2M527 433h2M522 391v2M521 392h2M529 408v2M528 409h2M511 422v2M510 423h2M525 448v2M524 449h2M527 421v2M526 422h2M516 414v2M515 415h2M515 433v2M514 434h2M526 374v2M525 375h2M534 378v2M533 379h2M534 424v2M533 425h2M508 425v2M507 426h2M529 384v2M528 385h2M540 407v2M539 408h2M518 437v2M517 438h2M530 395v2M529 396h2M530 394v2M529 395h2M538 423v2M537 424h2M537 403v2M536 404h2M529 416v2M528 417h2M535 399v2M534 400h2M541 407v2M540 408h2M579 460v2M578 461h2M578 461v2M577 462h2M569 455v2M568 456h2M558 450v2M557 451h2M581 464v2M580 465h2M564 452v2M563 453h2M561 450v2M560 451h2M577 468v2M576 469h2M573 456v2M572 457h2M584 466v2M583 467h2M561 447v2M560 448h2M560 449v2M559 450h2M564 451v2M563 452h2M581 466v2M580 467h2M567 458v2M566 459h2M576 461v2M575 462h2M577 457v2M576 458h2M567 454v2M566 455h2M557 444v2M556 445h2M549 444v2M548 445h2M569 456v2M568 457h2M559 445v2M558 446h2M583 464v2M582 465h2M556 447v2M555 448h2M560 451v2M559 452h2M563 448v2M562 449h2M557 448v2M556 449h2M572 457v2M571 458h2M553 446v2M552 447h2M573 456v2M572 457h2M553 445v2M552 446h2M568 459v2M567 460h2M577 458v2M576 459h2M568 452v2M567 453h2M558 448v2M557 449h2M578 458v2M577 459h2M560 449v2M559 450h2M554 448v2M553 449h2M565 451v2M564 452h2M557 448v2M556 449h2" stroke="#c0c0c0" stroke-width="0.7"/><g fill="#DC9A10" font-family="Liberation Sans" font-size="10.5"><text x="551" y="362">100</text><text x="551" y="376">80</text><text x="551" y="391">60</text><text x="551" y="405">40</text><text x="551" y="420">20</text></g>
</g>
</svg>
<div class="a" style="left:450px;top:748px;width:193px;height:19px;background:#929292"></div>
<svg style="left:447px;top:748px" width="200" height="19">
<path d="M0 0 L70 0 L74 18 L9 18Z" fill="#C6C3BC"/>
<path d="M0 0 L9 18" stroke="#808080"/>
<path d="M66 -1 L172 -1 L163 18 L75 18Z" fill="#D4D0C8"/>
<path d="M66 0 L75 18" stroke="#808080"/><path d="M172 0 L163 18" stroke="#fff"/>
<path d="M9 18.5 L165 18.5" stroke="#808080"/>
</svg>
<div class="t" style="left:467px;top:750px">Trimmer</div>
<div class="t" style="left:528px;top:750px;font-weight:bold">Video Scopes</div>
<!-- PREVIEW -->
<svg style="left:654px;top:69px" width="9" height="24"><path d="M1.5 1.5 L7.5 7 M7.5 1.5 L1.5 7" stroke="#3a3a48" stroke-width="1.6"/><path d="M7 13 L2 17.5 L7 22Z" fill="#3a3e48"/></svg>
<div class="gd" style="left:656px;top:100px"></div><div class="gd" style="left:656px;top:105px"></div><div class="gd" style="left:656px;top:110px"></div><div class="gd" style="left:656px;top:115px"></div><div class="gd" style="left:656px;top:120px"></div><div class="gd" style="left:656px;top:125px"></div>
<svg style="left:670px;top:73px" width="15" height="15"><rect x="0.5" y="0.5" width="13" height="13" rx="2" fill="#e6e8f0" stroke="#8888e8"/><path d="M3 4h3M3 6.5h3M3 9h3M3 11.5h3" stroke="#555"/><path d="M7 4 L7 11 L9 9.5 L10.5 12.5 L12 12 L10.5 9 L13 9Z" fill="#111"/></svg>
<div class="sep" style="left:693px;top:71px;height:18px"></div>
<svg style="left:701px;top:72px" width="17" height="16"><rect x="0.5" y="0.5" width="15" height="12" rx="2" fill="#a8dce8" stroke="#6a7a90"/><rect x="2.5" y="2.5" width="11" height="8" fill="#c8ecf4"/><rect x="5" y="13" width="6" height="2" fill="#808890"/><rect x="12" y="9" width="3" height="3" fill="#30b060"/></svg>
<div class="sep" style="left:725px;top:71px;height:18px"></div>
<svg style="left:734px;top:74px" width="17" height="12"><circle cx="2.5" cy="6" r="2" fill="none" stroke="#8a8e98"/><circle cx="14.5" cy="6" r="2" fill="none" stroke="#8a8e98"/><path d="M4.5 6h8" stroke="#8a8e98"/><rect x="6.5" y="1.5" width="4" height="9" rx="1" fill="#c0c4cc" stroke="#8a8e98"/></svg>
<svg style="left:758px;top:72px" width="16" height="16"><rect x="0.5" y="0.5" width="15" height="15" fill="#a8acd8" stroke="#6a6e98"/><circle cx="8" cy="8" r="5.5" fill="#3c3e58"/><path d="M8 2.5 A5.5 5.5 0 0 1 8 13.5Z" fill="#5c5e78"/></svg>
<svg style="left:781px;top:79px" width="7" height="4"><path d="M0 0h6l-3 3z" fill="#000"/></svg>
<div class="t" style="left:792px;top:74px;letter-spacing:-0.2px">Good (Full)</div>
<svg style="left:853px;top:79px" width="7" height="4"><path d="M0 0h6l-3 3z" fill="#000"/></svg>
<svg style="left:867px;top:73px" width="15" height="14"><path d="M4.5 0v14M10.5 0v14M0 4.5h15M0 9.5h15" stroke="#7a7ee8" stroke-width="1.2"/></svg>
<svg style="left:890px;top:79px" width="7" height="4"><path d="M0 0h6l-3 3z" fill="#000"/></svg>
<div class="sep" style="left:903px;top:71px;height:18px"></div>
<svg style="left:911px;top:72px" width="16" height="16"><rect x="0.5" y="0.5" width="9" height="10" rx="1" fill="#f4f4f4" stroke="#555"/><path d="M2.5 3h5M2.5 5h5M2.5 7h5" stroke="#888"/><rect x="6.5" y="6.5" width="9" height="9" rx="2" fill="#d8dcf8" stroke="#8888e8"/><path d="M8.5 9.5h5M8.5 11.5h5M8.5 13.5h5" stroke="#8888e8"/></svg>
<svg style="left:936px;top:72px" width="15" height="15"><rect x="0.5" y="0.5" width="13" height="14" rx="1.5" fill="#5a5a5c" stroke="#707074"/><rect x="3" y="1" width="8" height="6" fill="#fff"/><rect x="3" y="10" width="8" height="4" fill="#111"/><rect x="8" y="11" width="2" height="3" fill="#fff"/></svg>

<div class="a" style="left:666px;top:94px;width:607px;height:647px;background:#fff;border-bottom:1px solid #a8a8a8;border-right:1px solid #a8a8a8"></div>
<div class="a" style="left:666px;top:177px;width:606px;height:480px;background:#000"></div>
<svg style="left:666px;top:233px;overflow:hidden" width="606" height="367" viewBox="0 0 606 367"><defs><clipPath id="pc"><rect width="606" height="367"/></clipPath></defs><g clip-path="url(#pc)"><use href="#photo"/></g></svg>
<div class="t" style="left:666px;top:743px">Project:</div>
<div class="t" style="left:712px;top:743px">720x480x32, 29.970i</div>
<div class="t" style="left:666px;top:756px">Preview:</div>
<div class="t" style="left:712px;top:756px">720x480x32, 29.970i</div>
<div class="t" style="left:968px;top:743px">Frame:</div>
<div class="t" style="left:1015px;top:743px">31</div>
<div class="t" style="left:968px;top:756px">Display:</div>
<div class="t" style="left:1015px;top:756px;color:#901414">655x480x32</div>
<!-- TIMELINE -->
<div class="a" style="left:2px;top:773px;width:1275px;height:1px;background:#808080"></div>
<div class="a" style="left:2px;top:774px;width:1275px;height:1px;background:#fff"></div>
<div class="gd" style="left:8px;top:780px"></div>
<div class="gd" style="left:8px;top:785px"></div>
<div class="gd" style="left:8px;top:790px"></div>
<div class="gd" style="left:8px;top:795px"></div>
<div class="gd" style="left:8px;top:800px"></div>
<div class="gd" style="left:8px;top:805px"></div>
<div class="t" style="left:189px;top:785px;font-size:22px;line-height:26px;color:#333;letter-spacing:-0.6px">00:00:01;01</div>
<div class="a" style="left:2px;top:820px;width:301px;height:65px;border-top:1px solid #808080;border-left:1px solid #808080;border-bottom:1px solid #808080"></div>
<div class="a" style="left:3px;top:821px;width:299px;height:63px;background:#A3A7B5;border-top:1px solid #fff;border-left:1px solid #fff"></div>
<svg style="left:7px;top:825px" width="13" height="16"><rect x="0.5" y="0.5" width="12" height="6" rx="1.5" fill="#9aa0d0" stroke="#8088c0"/><path d="M3 3.5h7" stroke="#fff" stroke-width="1.2"/><rect x="0.5" y="8.5" width="12" height="7" rx="1.5" fill="#9aa0d0" stroke="#8088c0"/><rect x="3" y="10.5" width="7" height="3" fill="none" stroke="#fff"/></svg>
<div class="a" style="left:23px;top:824px;width:25px;height:17px;border-radius:2px;background:linear-gradient(#8a9cd0,#6a80b8);border:1px solid #5a70a8"></div>
<div class="a" style="left:25px;top:826px;width:5px;height:5px;background:#fff"></div>
<div class="t" style="left:38px;top:826px;color:#fff;font-size:12px">1</div>
<div class="a" style="left:51px;top:824px;width:111px;height:17px;background:#D4D0C8;border-top:1px solid #b8b4ac"></div>
<svg style="left:167px;top:826px" width="15" height="15"><rect x="6.5" y="0.5" width="7" height="7" fill="#e8e8e8" stroke="#888"/><rect x="4.5" y="2.5" width="7" height="7" fill="#e0e0e0" stroke="#888"/><rect x="1.5" y="6.5" width="6" height="6" fill="#a8e0a8" stroke="#8080d0"/><path d="M0 0 L14 14" stroke="#d03030" stroke-width="1.2"/></svg>
<svg style="left:189px;top:826px" width="16" height="15"><rect x="0.5" y="0.5" width="11" height="9" fill="#f4f4f4" stroke="#555"/><path d="M3 3 L7 7 M7 4v3h-3" stroke="#223" stroke-width="1.2" fill="none"/><rect x="6.5" y="6.5" width="9" height="8" fill="#c8ccf4" stroke="#8890e0"/></svg>
<svg style="left:215px;top:828px" width="16" height="10"><circle cx="2.5" cy="5" r="2" fill="none" stroke="#8a8e98"/><circle cx="13.5" cy="5" r="2" fill="none" stroke="#8a8e98"/><path d="M4.5 5h7" stroke="#8a8e98"/><rect x="6" y="0.5" width="4" height="9" rx="1" fill="#b0b4bc" stroke="#8a8e98"/></svg>
<svg style="left:237px;top:825px" width="16" height="16"><circle cx="8" cy="8" r="6" fill="#888" stroke="#777" stroke-width="2.5" stroke-dasharray="2 1.5"/><circle cx="8" cy="8" r="4.5" fill="#fff" stroke="#c02030" stroke-width="1.5"/><circle cx="8" cy="8" r="1.5" fill="#c02030"/></svg>
<svg style="left:262px;top:826px" width="14" height="14"><circle cx="6.5" cy="6.5" r="5.5" fill="#c8ccf0" stroke="#8a8ee8" stroke-width="1.5"/><path d="M3 3 L10 10" stroke="#fff" stroke-width="2"/></svg>
<svg style="left:285px;top:826px" width="6" height="15"><path d="M1 0.5 L5 0.5 L3.5 10 L2.5 10Z" fill="#9080d0" stroke="#7060b0" stroke-width="0.8"/><circle cx="3" cy="13" r="1.5" fill="#9080d0"/></svg>
<div class="t" style="left:25px;top:848px;letter-spacing:0.1px">Level: 100.0 %</div>
<div class="a" style="left:117px;top:853px;width:96px;height:1px;background:#707070"></div>
<div class="a" style="left:117px;top:854px;width:96px;height:1px;background:#fff"></div>
<div class="a" style="left:212px;top:848px;width:18px;height:13px;border-radius:2px;background:linear-gradient(#f0f0f0,#c8c8c8);border:1px solid #888"></div>
<div class="a" style="left:218px;top:851px;width:1px;height:7px;background:#777;box-shadow:2px 0 0 #777,4px 0 0 #777"></div>
<svg style="left:240px;top:847px" width="16" height="16"><rect x="0.5" y="0.5" width="11" height="9" fill="#b8e8b8" stroke="#222"/><path d="M1 2h10M1 8h10" stroke="#222" stroke-dasharray="1.5 1"/><rect x="5.5" y="5.5" width="10" height="10" fill="#a8e0a8" stroke="#8890e0"/><text x="7" y="14" font-family="Liberation Sans" font-size="9" fill="#223">α</text></svg>
<svg style="left:262px;top:847px" width="14" height="15"><path d="M4 0 L8 4 L5.5 4 L5.5 10 L2.5 10 L2.5 4 L0 4Z" fill="#9a9aa0"/><rect x="3" y="11" width="10" height="3" fill="#b8b8bc"/></svg>
<svg style="left:281px;top:847px" width="14" height="15"><rect x="0" y="0" width="10" height="3" fill="#b8b8bc"/><path d="M9 14 L13 10 L10.5 10 L10.5 4 L7.5 4 L7.5 10 L5 10Z" fill="#9a9aa0"/></svg>
<div class="a" style="left:2px;top:885px;width:301px;height:44px;border-left:1px solid #808080;border-bottom:1px solid #fff;border-right:1px solid #fff"></div>
<div class="t" style="left:5px;top:943px">Rate: 0.00</div>
<div class="a" style="left:88px;top:950px;width:201px;height:1px;background:#808080"></div>
<div class="a" style="left:88px;top:951px;width:201px;height:1px;background:#fff"></div>
<svg style="left:173px;top:944px" width="29" height="13"><path d="M0.5 6 L6 0.5 L11 6 L6 11.5Z M9 6 L14.5 0.5 L20 6 L14.5 11.5Z" fill="#8a8e98" stroke="#6a6e78" stroke-width="0.8"/><path d="M18 0.5 L26 6 L18 11.5Z" fill="#9a9ea8" stroke="#6a6e78" stroke-width="0.8"/><path d="M7 1.5 L7 10.5 L2 6Z" fill="#b8bcc4"/></svg>
<svg style="left:201px;top:957px" width="13" height="12"><path d="M6.5 0.5 L12.5 11.5 L0.5 11.5Z" fill="#d89040" stroke="#b87030" stroke-width="0.8"/></svg>
<div class="a" style="left:302px;top:820px;width:1px;height:108px;background:#fff"></div>
<div class="a" style="left:308px;top:775px;width:1px;height:170px;background:#808080"></div><div class="a" style="left:309px;top:775px;width:1px;height:109px;background:#fff"></div>
<div class="a" style="left:324px;top:778px;width:884px;height:2px;background:#0A246A"></div>
<svg style="left:1201px;top:774px" width="12" height="10"><path d="M0 3.5 L7 3.5 L7 1 L10 4.5 L7 8 L7 5.5 L0 5.5Z" fill="#0A246A"/><rect x="10" y="1" width="1.5" height="8" fill="#0A246A"/></svg>
<div class="a" style="left:1214px;top:774px;width:34px;height:13px;background:#FFFFE1;border:1px solid #000"></div>
<div class="t" style="left:1217px;top:774px;font-size:10px;line-height:13px">+6;00</div>
<svg style="left:309px;top:795px" width="9" height="9"><path d="M0 0 L8 0 L0 8Z" fill="#f0e000"/></svg>
<div class="a" style="left:309px;top:803px;width:950px;height:1px;background:#808080"></div>
<div class="a" style="left:309px;top:804px;width:950px;height:1px;background:#fff"></div>
<div class="a" style="left:309px;top:820px;width:950px;height:1px;background:#808080"></div>
<svg style="left:0;top:0" width="1279" height="996"><path d="M346.5 817V821M383.5 817V821M420.5 817V821M457.5 814V821M494.5 817V821M531.5 817V821M568.5 817V821M605.5 814V821M642.5 817V821M679.5 817V821M716.5 817V821M753.5 814V821M790.5 817V821M827.5 817V821M864.5 817V821M901.5 814V821M938.5 817V821M975.5 817V821M1012.5 817V821M1049.5 814V821M1086.5 817V821M1123.5 817V821M1160.5 817V821M1197.5 814V821M1234.5 817V821" stroke="#000" stroke-width="1"/></svg>
<div class="t" style="left:311px;top:806px;font-size:10px;line-height:13px;letter-spacing:-0.4px">00:00:00;00</div><div class="t" style="left:459px;top:806px;font-size:10px;line-height:13px;letter-spacing:-0.4px">00:00:01;00</div><div class="t" style="left:607px;top:806px;font-size:10px;line-height:13px;letter-spacing:-0.4px">00:00:02;00</div><div class="t" style="left:755px;top:806px;font-size:10px;line-height:13px;letter-spacing:-0.4px">00:00:03;00</div><div class="t" style="left:903px;top:806px;font-size:10px;line-height:13px;letter-spacing:-0.4px">00:00:04;00</div><div class="t" style="left:1051px;top:806px;font-size:10px;line-height:13px;letter-spacing:-0.4px">00:00:05;00</div><div class="t" style="left:1199px;top:806px;font-size:10px;line-height:13px;letter-spacing:-0.4px">00:00:06;00</div>
<div class="a" style="left:310px;top:823px;width:902px;height:60px;background:#6A79A0"></div>
<svg style="left:312px;top:826px;overflow:hidden" width="96" height="54" viewBox="0 0 606 367" preserveAspectRatio="none" overflow="hidden"><use href="#photo"/></svg><svg style="left:412px;top:826px;overflow:hidden" width="96" height="54" viewBox="0 0 606 367" preserveAspectRatio="none" overflow="hidden"><use href="#photo"/></svg><svg style="left:513px;top:826px;overflow:hidden" width="96" height="54" viewBox="0 0 606 367" preserveAspectRatio="none" overflow="hidden"><use href="#photo"/></svg><svg style="left:613px;top:826px;overflow:hidden" width="96" height="54" viewBox="0 0 606 367" preserveAspectRatio="none" overflow="hidden"><use href="#photo"/></svg><svg style="left:713px;top:826px;overflow:hidden" width="96" height="54" viewBox="0 0 606 367" preserveAspectRatio="none" overflow="hidden"><use href="#photo"/></svg><svg style="left:814px;top:826px;overflow:hidden" width="96" height="54" viewBox="0 0 606 367" preserveAspectRatio="none" overflow="hidden"><use href="#photo"/></svg><svg style="left:914px;top:826px;overflow:hidden" width="96" height="54" viewBox="0 0 606 367" preserveAspectRatio="none" overflow="hidden"><use href="#photo"/></svg><svg style="left:1014px;top:826px;overflow:hidden" width="96" height="54" viewBox="0 0 606 367" preserveAspectRatio="none" overflow="hidden"><use href="#photo"/></svg><svg style="left:1114px;top:826px;overflow:hidden" width="97" height="54" viewBox="0 0 606 367" preserveAspectRatio="none" overflow="hidden"><use href="#photo"/></svg>
<svg style="left:0;top:0" width="1279" height="996"><path d="M310.0 823.5 L319.9 823.5 L324.4 827.5 L328.9 823.5 L334.6 823.5 L339.1 827.5 L343.6 823.5 L349.3 823.5 L353.8 827.5 L358.3 823.5 L364.0 823.5 L368.5 827.5 L373.0 823.5 L378.7 823.5 L383.2 827.5 L387.7 823.5 L393.4 823.5 L397.9 827.5 L402.4 823.5 L408.1 823.5 L412.6 827.5 L417.1 823.5 L422.8 823.5 L427.3 827.5 L431.8 823.5 L437.5 823.5 L442.0 827.5 L446.5 823.5 L452.2 823.5 L456.7 827.5 L461.2 823.5 L466.9 823.5 L471.4 827.5 L475.9 823.5 L481.6 823.5 L486.1 827.5 L490.6 823.5 L496.3 823.5 L500.8 827.5 L505.3 823.5 L511.0 823.5 L515.5 827.5 L520.0 823.5 L525.7 823.5 L530.2 827.5 L534.7 823.5 L540.4 823.5 L544.9 827.5 L549.4 823.5 L555.1 823.5 L559.6 827.5 L564.1 823.5 L569.8 823.5 L574.3 827.5 L578.8 823.5 L584.5 823.5 L589.0 827.5 L593.5 823.5 L599.2 823.5 L603.7 827.5 L608.2 823.5 L613.9 823.5 L618.4 827.5 L622.9 823.5 L628.6 823.5 L633.1 827.5 L637.6 823.5 L643.3 823.5 L647.8 827.5 L652.3 823.5 L658.0 823.5 L662.5 827.5 L667.0 823.5 L672.7 823.5 L677.2 827.5 L681.7 823.5 L687.4 823.5 L691.9 827.5 L696.4 823.5 L702.1 823.5 L706.6 827.5 L711.1 823.5 L716.8 823.5 L721.3 827.5 L725.8 823.5 L731.5 823.5 L736.0 827.5 L740.5 823.5 L746.2 823.5 L750.7 827.5 L755.2 823.5 L760.9 823.5 L765.4 827.5 L769.9 823.5 L775.6 823.5 L780.1 827.5 L784.6 823.5 L790.3 823.5 L794.8 827.5 L799.3 823.5 L805.0 823.5 L809.5 827.5 L814.0 823.5 L819.7 823.5 L824.2 827.5 L828.7 823.5 L834.4 823.5 L838.9 827.5 L843.4 823.5 L849.1 823.5 L853.6 827.5 L858.1 823.5 L863.8 823.5 L868.3 827.5 L872.8 823.5 L878.5 823.5 L883.0 827.5 L887.5 823.5 L893.2 823.5 L897.7 827.5 L902.2 823.5 L907.9 823.5 L912.4 827.5 L916.9 823.5 L922.6 823.5 L927.1 827.5 L931.6 823.5 L937.3 823.5 L941.8 827.5 L946.3 823.5 L952.0 823.5 L956.5 827.5 L961.0 823.5 L966.7 823.5 L971.2 827.5 L975.7 823.5 L981.4 823.5 L985.9 827.5 L990.4 823.5 L996.1 823.5 L1000.6 827.5 L1005.1 823.5 L1010.8 823.5 L1015.3 827.5 L1019.8 823.5 L1025.5 823.5 L1030.0 827.5 L1034.5 823.5 L1040.2 823.5 L1044.7 827.5 L1049.2 823.5 L1054.9 823.5 L1059.4 827.5 L1063.9 823.5 L1069.6 823.5 L1074.1 827.5 L1078.6 823.5 L1084.3 823.5 L1088.8 827.5 L1093.3 823.5 L1099.0 823.5 L1103.5 827.5 L1108.0 823.5 L1113.7 823.5 L1118.2 827.5 L1122.7 823.5 L1128.4 823.5 L1132.9 827.5 L1137.4 823.5 L1143.1 823.5 L1147.6 827.5 L1152.1 823.5 L1157.8 823.5 L1162.3 827.5 L1166.8 823.5 L1172.5 823.5 L1177.0 827.5 L1181.5 823.5 L1187.2 823.5 L1191.7 827.5 L1196.2 823.5 L1201.9 823.5 L1206.4 827.5 L1210.9 823.5 L1212.0 823.5 L1212 821 L310 821Z" fill="#D4D0C8"/><path d="M310.0 823.5 L319.9 823.5 L324.4 827.5 L328.9 823.5 L334.6 823.5 L339.1 827.5 L343.6 823.5 L349.3 823.5 L353.8 827.5 L358.3 823.5 L364.0 823.5 L368.5 827.5 L373.0 823.5 L378.7 823.5 L383.2 827.5 L387.7 823.5 L393.4 823.5 L397.9 827.5 L402.4 823.5 L408.1 823.5 L412.6 827.5 L417.1 823.5 L422.8 823.5 L427.3 827.5 L431.8 823.5 L437.5 823.5 L442.0 827.5 L446.5 823.5 L452.2 823.5 L456.7 827.5 L461.2 823.5 L466.9 823.5 L471.4 827.5 L475.9 823.5 L481.6 823.5 L486.1 827.5 L490.6 823.5 L496.3 823.5 L500.8 827.5 L505.3 823.5 L511.0 823.5 L515.5 827.5 L520.0 823.5 L525.7 823.5 L530.2 827.5 L534.7 823.5 L540.4 823.5 L544.9 827.5 L549.4 823.5 L555.1 823.5 L559.6 827.5 L564.1 823.5 L569.8 823.5 L574.3 827.5 L578.8 823.5 L584.5 823.5 L589.0 827.5 L593.5 823.5 L599.2 823.5 L603.7 827.5 L608.2 823.5 L613.9 823.5 L618.4 827.5 L622.9 823.5 L628.6 823.5 L633.1 827.5 L637.6 823.5 L643.3 823.5 L647.8 827.5 L652.3 823.5 L658.0 823.5 L662.5 827.5 L667.0 823.5 L672.7 823.5 L677.2 827.5 L681.7 823.5 L687.4 823.5 L691.9 827.5 L696.4 823.5 L702.1 823.5 L706.6 827.5 L711.1 823.5 L716.8 823.5 L721.3 827.5 L725.8 823.5 L731.5 823.5 L736.0 827.5 L740.5 823.5 L746.2 823.5 L750.7 827.5 L755.2 823.5 L760.9 823.5 L765.4 827.5 L769.9 823.5 L775.6 823.5 L780.1 827.5 L784.6 823.5 L790.3 823.5 L794.8 827.5 L799.3 823.5 L805.0 823.5 L809.5 827.5 L814.0 823.5 L819.7 823.5 L824.2 827.5 L828.7 823.5 L834.4 823.5 L838.9 827.5 L843.4 823.5 L849.1 823.5 L853.6 827.5 L858.1 823.5 L863.8 823.5 L868.3 827.5 L872.8 823.5 L878.5 823.5 L883.0 827.5 L887.5 823.5 L893.2 823.5 L897.7 827.5 L902.2 823.5 L907.9 823.5 L912.4 827.5 L916.9 823.5 L922.6 823.5 L927.1 827.5 L931.6 823.5 L937.3 823.5 L941.8 827.5 L946.3 823.5 L952.0 823.5 L956.5 827.5 L961.0 823.5 L966.7 823.5 L971.2 827.5 L975.7 823.5 L981.4 823.5 L985.9 827.5 L990.4 823.5 L996.1 823.5 L1000.6 827.5 L1005.1 823.5 L1010.8 823.5 L1015.3 827.5 L1019.8 823.5 L1025.5 823.5 L1030.0 827.5 L1034.5 823.5 L1040.2 823.5 L1044.7 827.5 L1049.2 823.5 L1054.9 823.5 L1059.4 827.5 L1063.9 823.5 L1069.6 823.5 L1074.1 827.5 L1078.6 823.5 L1084.3 823.5 L1088.8 827.5 L1093.3 823.5 L1099.0 823.5 L1103.5 827.5 L1108.0 823.5 L1113.7 823.5 L1118.2 827.5 L1122.7 823.5 L1128.4 823.5 L1132.9 827.5 L1137.4 823.5 L1143.1 823.5 L1147.6 827.5 L1152.1 823.5 L1157.8 823.5 L1162.3 827.5 L1166.8 823.5 L1172.5 823.5 L1177.0 827.5 L1181.5 823.5 L1187.2 823.5 L1191.7 827.5 L1196.2 823.5 L1201.9 823.5 L1206.4 827.5 L1210.9 823.5 L1212.0 823.5" fill="none" stroke="#4c5470" stroke-width="1"/></svg>
<svg style="left:0;top:0" width="1279" height="996"><path d="M320.5 880h5l-2.5 2.5zM335.5 880h5l-2.5 2.5zM350.5 880h5l-2.5 2.5zM365.5 880h5l-2.5 2.5zM380.5 880h5l-2.5 2.5zM395.5 880h5l-2.5 2.5zM410.5 880h5l-2.5 2.5zM425.5 880h5l-2.5 2.5zM440.5 880h5l-2.5 2.5zM455.5 880h5l-2.5 2.5zM470.5 880h5l-2.5 2.5zM485.5 880h5l-2.5 2.5zM500.5 880h5l-2.5 2.5zM515.5 880h5l-2.5 2.5zM530.5 880h5l-2.5 2.5zM545.5 880h5l-2.5 2.5zM560.5 880h5l-2.5 2.5zM575.5 880h5l-2.5 2.5zM590.5 880h5l-2.5 2.5zM605.5 880h5l-2.5 2.5zM620.5 880h5l-2.5 2.5zM635.5 880h5l-2.5 2.5zM650.5 880h5l-2.5 2.5zM665.5 880h5l-2.5 2.5zM680.5 880h5l-2.5 2.5zM695.5 880h5l-2.5 2.5zM710.5 880h5l-2.5 2.5zM725.5 880h5l-2.5 2.5zM740.5 880h5l-2.5 2.5zM755.5 880h5l-2.5 2.5zM770.5 880h5l-2.5 2.5zM785.5 880h5l-2.5 2.5zM800.5 880h5l-2.5 2.5zM815.5 880h5l-2.5 2.5zM830.5 880h5l-2.5 2.5zM845.5 880h5l-2.5 2.5zM860.5 880h5l-2.5 2.5zM875.5 880h5l-2.5 2.5zM890.5 880h5l-2.5 2.5zM905.5 880h5l-2.5 2.5zM920.5 880h5l-2.5 2.5zM935.5 880h5l-2.5 2.5zM950.5 880h5l-2.5 2.5zM965.5 880h5l-2.5 2.5zM980.5 880h5l-2.5 2.5zM995.5 880h5l-2.5 2.5zM1010.5 880h5l-2.5 2.5zM1025.5 880h5l-2.5 2.5zM1040.5 880h5l-2.5 2.5zM1055.5 880h5l-2.5 2.5zM1070.5 880h5l-2.5 2.5zM1085.5 880h5l-2.5 2.5zM1100.5 880h5l-2.5 2.5zM1115.5 880h5l-2.5 2.5zM1130.5 880h5l-2.5 2.5zM1145.5 880h5l-2.5 2.5zM1160.5 880h5l-2.5 2.5zM1175.5 880h5l-2.5 2.5zM1190.5 880h5l-2.5 2.5zM1205.5 880h5l-2.5 2.5z" fill="#e8e8f0"/></svg>
<div class="a" style="left:313px;top:828px;width:143px;height:15px;background:#fff;border:1px solid #bbb"></div>
<div class="t" style="left:315px;top:829px;letter-spacing:-0.1px">Vipers_Matrox_iframe_codec</div>
<div class="a" style="left:312px;top:869px;width:7px;height:11px;background:#fff"></div><div class="t" style="left:312px;top:867px;font-size:10px">0</div><svg style="left:412px;top:869px" width="8" height="14"><path d="M0 0H7V10H4.5L1 13.5L0 10Z" fill="#fff"/></svg><div class="t" style="left:412px;top:867px;font-size:10px">0</div><svg style="left:529px;top:869px" width="8" height="14"><path d="M0 0H7V10H4.5L1 13.5L0 10Z" fill="#fff"/></svg><div class="t" style="left:529px;top:867px;font-size:10px">0</div><svg style="left:632px;top:869px" width="8" height="14"><path d="M0 0H7V10H4.5L1 13.5L0 10Z" fill="#fff"/></svg><div class="t" style="left:632px;top:867px;font-size:10px">0</div><svg style="left:752px;top:869px" width="8" height="14"><path d="M0 0H7V10H4.5L1 13.5L0 10Z" fill="#fff"/></svg><div class="t" style="left:752px;top:867px;font-size:10px">0</div><svg style="left:870px;top:869px" width="8" height="14"><path d="M0 0H7V10H4.5L1 13.5L0 10Z" fill="#fff"/></svg><div class="t" style="left:870px;top:867px;font-size:10px">0</div><svg style="left:975px;top:869px" width="8" height="14"><path d="M0 0H7V10H4.5L1 13.5L0 10Z" fill="#fff"/></svg><div class="t" style="left:975px;top:867px;font-size:10px">0</div><svg style="left:1093px;top:869px" width="8" height="14"><path d="M0 0H7V10H4.5L1 13.5L0 10Z" fill="#fff"/></svg><div class="t" style="left:1093px;top:867px;font-size:10px">0</div><svg style="left:1197px;top:869px" width="8" height="14"><path d="M0 0H7V10H4.5L1 13.5L0 10Z" fill="#fff"/></svg><div class="t" style="left:1197px;top:867px;font-size:10px">0</div>
<svg style="left:1196px;top:843px" width="14" height="32"><path d="M3 0v10h10 M0 3h10v10" stroke="#e0e0e8" stroke-width="1.5" fill="none"/><rect x="3" y="18" width="6" height="12" rx="2" fill="#c8c8d0" stroke="#909098"/><circle cx="2" cy="23" r="2" fill="#c8c8d0"/><circle cx="11" cy="23" r="2" fill="#c8c8d0"/></svg>
<div class="a" style="left:309px;top:884px;width:951px;height:44px;background:#A9A8A3;border-top:1px solid #8a8984"></div>
<svg style="left:0;top:0" width="1279" height="996"><path d="M309.5 885V928M457.5 885V928M605.5 885V928M753.5 885V928M901.5 885V928M1049.5 885V928M1197.5 885V928" stroke="#202020" stroke-dasharray="1 3"/><path d="M462.5 820V928" stroke="#000"/></svg>
<svg style="left:456px;top:805px" width="13" height="16"><path d="M1.5 1.5 Q1.5 0.5 3 0.5 L10 0.5 Q11.5 0.5 11.5 2 L11.5 11 L6.5 15 L1.5 11Z" fill="#dcdce0" stroke="#909098"/><path d="M4.5 3v7M6.5 3v7M8.5 3v7" stroke="#6a6a70"/></svg>
<div class="a" style="left:1259px;top:774px;width:18px;height:171px;background:#D4D0C8"></div>
<div class="btn" style="left:1260px;top:773px;width:16px;height:16px"></div>
<svg style="left:1262px;top:775px" width="12" height="12"><path d="M2.5 11V2.5H10V7.5H4" stroke="#000" stroke-width="1.8" fill="none"/><rect x="3" y="3" width="6.5" height="4" fill="#000"/></svg>
<div class="btn" style="left:1260px;top:789px;width:16px;height:16px"></div>
<svg style="left:1264px;top:795px" width="9" height="5"><path d="M0 4.5h8L4 0.5z" fill="#000"/></svg>
<div class="a chk" style="left:1260px;top:805px;width:16px;height:70px"></div>
<div class="btn" style="left:1260px;top:805px;width:16px;height:43px"></div>
<div class="btn" style="left:1260px;top:874px;width:16px;height:16px"></div>
<svg style="left:1264px;top:880px" width="9" height="5"><path d="M0 0.5h8L4 4.5z" fill="#000"/></svg>
<div class="btn" style="left:1260px;top:890px;width:16px;height:16px"></div>
<svg style="left:1264px;top:894px" width="9" height="9"><path d="M4 0v8M0 4h8" stroke="#000" stroke-width="2"/></svg>
<div class="btn" style="left:1260px;top:906px;width:16px;height:6px"></div>
<div class="btn" style="left:1260px;top:912px;width:16px;height:16px"></div>
<svg style="left:1264px;top:919px" width="9" height="3"><path d="M0 1h8" stroke="#000" stroke-width="2"/></svg>
<div class="a chk" style="left:309px;top:928px;width:898px;height:16px"></div>
<div class="btn" style="left:309px;top:928px;width:16px;height:16px"></div>
<svg style="left:314px;top:932px" width="5" height="8"><path d="M4 0v7L0 3.5z" fill="#000"/></svg>
<div class="btn" style="left:325px;top:928px;width:57px;height:16px"></div>
<div class="a" style="left:330px;top:931px;width:1px;height:10px;background:#808080;box-shadow:1px 0 0 #fff"></div>
<div class="a" style="left:375px;top:931px;width:1px;height:10px;background:#808080;box-shadow:1px 0 0 #fff"></div>
<div class="btn" style="left:1207px;top:928px;width:15px;height:16px"></div>
<div class="btn" style="left:1222px;top:928px;width:16px;height:16px"></div>
<div class="btn" style="left:1238px;top:928px;width:5px;height:16px"></div>
<div class="btn" style="left:1243px;top:928px;width:16px;height:16px"></div>
<div class="btn" style="left:1259px;top:928px;width:17px;height:16px"></div>
<svg style="left:1212px;top:932px" width="5" height="8"><path d="M0 0v7L4 3.5z" fill="#000"/></svg>
<svg style="left:1226px;top:932px" width="9" height="9"><path d="M4 0v8M0 4h8" stroke="#000" stroke-width="2"/></svg>
<svg style="left:1247px;top:935px" width="9" height="3"><path d="M0 1h8" stroke="#000" stroke-width="2"/></svg>
<svg style="left:1262px;top:930px" width="12" height="12"><circle cx="5" cy="5" r="3.5" fill="none" stroke="#000" stroke-width="1.4"/><path d="M7.5 7.5L10.5 10.5" stroke="#000" stroke-width="1.8"/></svg>
<div class="a" style="left:309px;top:944px;width:951px;height:27px;border-top:1px solid #fff;border-left:1px solid #fff;border-bottom:1px solid #808080"></div>
<div class="a" style="left:309px;top:971px;width:967px;height:1px;background:#fff"></div><div class="a" style="left:1276px;top:773px;width:1px;height:199px;background:#808080"></div>
<svg style="left:316px;top:951px" width="16" height="15"><circle cx="7.5" cy="7" r="6.5" fill="#fff" stroke="#d04050" stroke-width="1.6"/><circle cx="7.5" cy="7" r="3.5" fill="#a05060"/></svg>
<div class="sep" style="left:339px;top:949px;height:18px"></div>
<svg style="left:350px;top:951px" width="15" height="15"><path d="M11.5 4.5 A5 5 0 1 0 12 9" stroke="#5a6070" stroke-width="1.8" fill="none"/><path d="M9 1 L13 1 L13 5Z" fill="#5a6070"/></svg>
<div class="sep" style="left:371px;top:949px;height:18px"></div>
<svg style="left:380px;top:951px" width="17" height="15"><defs><linearGradient id="tg" x1="0" y1="0" x2="0" y2="1"><stop offset="0" stop-color="#a8acb8"/><stop offset="1" stop-color="#5a6070"/></linearGradient></defs><rect x="0.5" y="0.5" width="2.5" height="14" fill="url(#tg)"/><path d="M4 0.5 L16 7.5 L4 14.5Z" fill="url(#tg)"/></svg>
<svg style="left:405px;top:951px" width="15" height="15"><path d="M0.5 0.5 L14 7.5 L0.5 14.5Z" fill="url(#tg)"/></svg>
<svg style="left:429px;top:951px" width="14" height="15"><rect x="0.5" y="0.5" width="4.5" height="14" fill="url(#tg)"/><rect x="8" y="0.5" width="4.5" height="14" fill="url(#tg)"/></svg>
<svg style="left:454px;top:951px" width="14" height="15"><rect x="0.5" y="1" width="12.5" height="13" fill="url(#tg)" stroke="#5a6070"/></svg>
<div class="sep" style="left:476px;top:949px;height:18px"></div>
<svg style="left:486px;top:951px" width="13" height="15"><rect x="0" y="0.5" width="2.5" height="14" fill="url(#tg)"/><path d="M12.5 0.5 L3 7.5 L12.5 14.5Z" fill="url(#tg)"/></svg>
<svg style="left:509px;top:951px" width="13" height="15"><path d="M0 0.5 L9.5 7.5 L0 14.5Z" fill="url(#tg)"/><rect x="10" y="0.5" width="2.5" height="14" fill="url(#tg)"/></svg>
<div class="a" style="left:1068px;top:950px;width:63px;height:18px;border-top:1px solid #808080;border-left:1px solid #808080;border-bottom:1px solid #fff;border-right:1px solid #fff"></div>
<div class="a" style="left:1138px;top:950px;width:65px;height:18px;border-top:1px solid #808080;border-left:1px solid #808080;border-bottom:1px solid #fff;border-right:1px solid #fff"></div>
<div class="a" style="left:1208px;top:950px;width:65px;height:18px;border-top:1px solid #808080;border-left:1px solid #808080;border-bottom:1px solid #fff;border-right:1px solid #fff"></div>
<div class="t" style="left:1071px;top:953px;letter-spacing:-0.1px">00:00:01;01</div>
<div class="a" style="left:1260px;top:944px;width:16px;height:28px;border-right:1px solid #808080"></div>
<div class="a" style="left:0;top:972px;width:1279px;height:1px;background:#D4D0C8"></div>
<div class="a" style="left:1050px;top:975px;width:226px;height:19px;border-top:1px solid #808080;border-left:1px solid #808080;border-bottom:1px solid #fff;border-right:1px solid #fff"></div>
<div class="t" style="left:1053px;top:978px;letter-spacing:-0.05px">Record Time (2 channels): 39:08:50</div>

</body></html>
